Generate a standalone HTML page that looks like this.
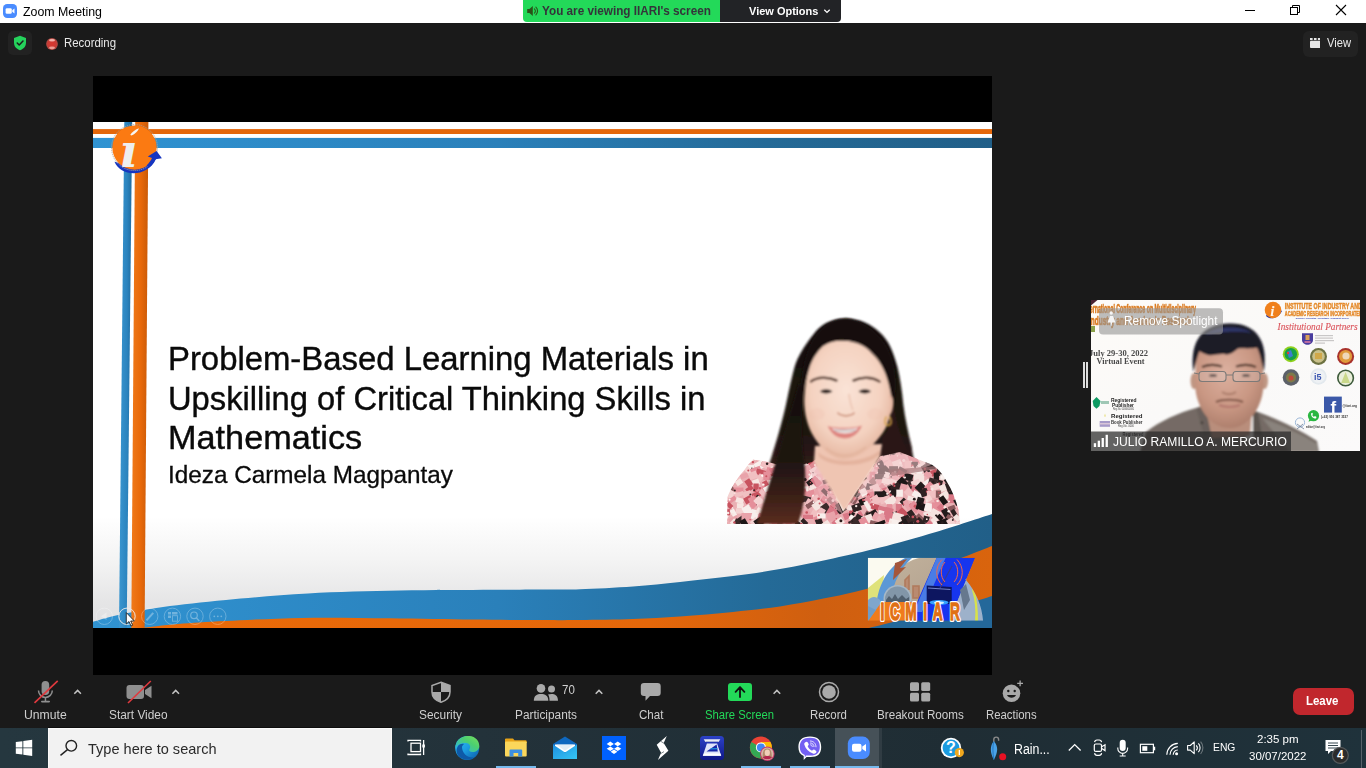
<!DOCTYPE html>
<html lang="en">
<head>
<meta charset="utf-8">
<title>Zoom Meeting</title>
<style>
*{box-sizing:border-box;margin:0;padding:0}
html,body{width:1366px;height:768px;overflow:hidden;background:#1a1a1a;font-family:"Liberation Sans",sans-serif;}
.abs{position:absolute}
.t{position:absolute;white-space:nowrap;line-height:1;transform-origin:0 0}
#titlebar{left:0;top:0;width:1366px;height:23px;background:#fff}
#zoombg{left:0;top:23px;width:1366px;height:705px;background:#1a1a1a}
#share{left:93px;top:76px;width:899px;height:599px;background:#000;overflow:hidden}
#slide{left:0;top:46px;width:899px;height:506px;background:#fff;overflow:hidden}
#taskbar{left:0;top:728px;width:1366px;height:40px;background:#21333c;overflow:hidden}
.lbl{color:#cfcfcf;font-size:12.5px}
</style>
</head>
<body>
<div class="abs" id="titlebar"></div>
<div class="abs" id="zoombg"></div>

<!-- TITLEBAR -->
<div id="tb-content">
<svg class="abs" style="left:3px;top:4px" width="14" height="14" viewBox="0 0 15 15"><rect width="15" height="15" rx="4.500" fill="#4a8cff"/><rect x="2.8" y="4.6" width="6.6" height="5.8" rx="1.4" fill="#fff"/><path d="M9.9 6.6 L12.3 4.9 V10.1 L9.9 8.4Z" fill="#fff"/></svg>
<span class="t" id="t-title" style="left:23px;top:5px;font-size:13px;color:#000;transform:scaleX(0.9507)">Zoom Meeting</span>
</div>

<svg class="abs" style="left:1236px;top:0" width="130" height="23" viewBox="1236 0 130 23">
 <path d="M1245 10.500 H1255" stroke="#000" stroke-width="1"/>
 <rect x="1290.500" y="7.500" width="7" height="7" fill="none" stroke="#000" stroke-width="1"/>
 <path d="M1292.500 7.500 V5.500 H1299.500 V12.500 H1297.500" fill="none" stroke="#000" stroke-width="1"/>
 <path d="M1336 5 L1346 15 M1346 5 L1336 15" stroke="#000" stroke-width="1.100"/>
</svg>
<!-- SHARE BANNER -->
<div class="abs" style="left:523px;top:0;width:197px;height:22px;background:#23d959;border-radius:0 0 0 4px"></div>
<div class="abs" style="left:720px;top:0;width:121px;height:22px;background:#222326;border-radius:0 0 4px 0"></div>
<span class="t" id="t-view" style="left:542px;top:5px;font-size:12px;font-weight:bold;color:#34343a;transform:scaleX(0.9780)">You are viewing IIARI's screen</span>
<span class="t" id="t-vo" style="left:749px;top:5.5px;font-size:11.5px;font-weight:bold;color:#fff;transform:scaleX(0.9554)">View Options</span>

<svg class="abs" style="left:526px;top:4px" width="14" height="14" viewBox="0 0 14 14"><path d="M1.200 5 H3.400 L6.800 2 V12 L3.400 9 H1.200Z" fill="#2a5218"/><path d="M8.400 4.800 A3 3 0 0 1 8.400 9.200 M9.900 3.200 A5.200 5.200 0 0 1 9.900 10.800" stroke="#2a5218" stroke-width="1.100" fill="none" stroke-linecap="round"/></svg>
<svg class="abs" style="left:822px;top:7px" width="10" height="8" viewBox="0 0 10 8"><path d="M2.300 2.800 L5 5.400 L7.700 2.800" stroke="#fff" stroke-width="1.300" fill="none"/></svg>
<!-- SHARE AREA -->
<div class="abs" id="share">
 <div class="abs" id="slide">
  <svg class="abs" style="left:0;top:0" width="899" height="506" viewBox="0 0 899 506">
   <defs>
    <linearGradient id="bgg" x1="0" y1="0" x2="0" y2="1"><stop offset="0" stop-color="#fff"/><stop offset="0.780" stop-color="#fff"/><stop offset="0.870" stop-color="#f3f3f3"/><stop offset="0.950" stop-color="#e5e5e6"/><stop offset="1" stop-color="#e0e0e2"/></linearGradient>
    <linearGradient id="blg" x1="0" y1="0" x2="1" y2="0"><stop offset="0" stop-color="#3093d2"/><stop offset="0.45" stop-color="#2a80ba"/><stop offset="0.75" stop-color="#246a97"/><stop offset="1" stop-color="#215f88"/></linearGradient>
    <linearGradient id="org" x1="0" y1="0" x2="1" y2="0"><stop offset="0" stop-color="#ea6a08"/><stop offset="0.6" stop-color="#e4670a"/><stop offset="0.8" stop-color="#cf5f10"/><stop offset="1" stop-color="#d9640d"/></linearGradient>
    <linearGradient id="vbl" x1="0" y1="0" x2="1" y2="0"><stop offset="0" stop-color="#3a96d0"/><stop offset="0.6" stop-color="#2b84bf"/><stop offset="1" stop-color="#1f6a9c"/></linearGradient>
    <linearGradient id="vor" x1="0" y1="0" x2="1" y2="0"><stop offset="0" stop-color="#f07a1a"/><stop offset="0.55" stop-color="#e8690a"/><stop offset="1" stop-color="#c95a08"/></linearGradient>
   </defs>
   <rect width="899" height="506" fill="url(#bgg)"/>
   <!-- bottom swoosh -->
   <path d="M0.0 499.8 C4.0 498.7 12.3 495.7 24.0 493.2 C35.7 490.7 51.8 487.5 70.0 485.0 C88.2 482.5 108.8 480.2 133.0 478.0 C157.2 475.8 186.0 473.1 215.0 471.5 C244.0 469.9 276.2 469.2 307.0 468.6 C337.8 468.0 375.2 468.0 400.0 467.8 C424.8 467.6 441.5 467.6 456.0 467.5 C470.5 467.4 473.0 467.8 487.0 467.3 C501.0 466.8 523.3 465.7 540.0 464.5 C556.7 463.3 570.3 461.8 587.0 460.0 C603.7 458.2 623.3 456.1 640.0 454.0 C656.7 451.9 670.3 450.0 687.0 447.1 C703.7 444.2 723.3 440.1 740.0 436.5 C756.7 432.9 769.8 430.0 787.0 425.6 C804.2 421.2 824.3 415.6 843.0 410.0 C861.7 404.4 889.7 395.0 899.0 392.0 V506 H0Z" fill="url(#blg)"/>
   <path d="M48.0 506.0 C54.2 505.3 70.8 503.2 85.0 502.0 C99.2 500.8 112.3 500.0 133.0 499.0 C153.7 498.0 181.7 496.3 209.0 495.9 C236.3 495.4 268.5 496.0 297.0 496.3 C325.5 496.6 355.0 497.3 380.0 497.6 C405.0 497.9 429.2 498.0 447.0 498.1 C464.8 498.2 471.5 498.2 487.0 498.0 C502.5 497.8 523.3 497.6 540.0 497.0 C556.7 496.4 570.3 495.6 587.0 494.4 C603.7 493.2 623.3 491.7 640.0 490.0 C656.7 488.3 671.9 486.6 687.0 484.4 C702.1 482.2 715.9 479.6 730.4 476.6 C744.9 473.7 757.7 471.1 774.3 466.7 C790.9 462.3 814.0 455.2 830.0 450.0 C846.0 444.8 858.5 439.6 870.0 435.2 C881.5 430.8 894.2 425.8 899.0 423.9 V506Z" fill="url(#org)"/>
   <path d="M776.0 506.0 C781.7 504.6 799.2 500.2 810.0 497.5 C820.8 494.8 831.0 492.5 841.0 490.0 C851.0 487.5 862.2 484.6 870.0 482.5 C877.8 480.4 883.2 478.9 888.0 477.5 C892.8 476.1 897.2 474.6 899.0 474.0 V506Z" fill="#24689a"/>
   <!-- top lines -->
   <rect x="0" y="7.100" width="899" height="4.900" fill="#e4670a"/>
   <rect x="0" y="15.900" width="899" height="10.100" fill="url(#blg)"/>
   <!-- vertical lines -->
   <path d="M31.300 0 H39.200 L33.700 506 H26Z" fill="url(#vbl)"/>
   <path d="M42.200 0 H55.400 L51.600 506 H38.300Z" fill="url(#vor)"/>
   <!-- logo -->
   <path d="M21.500 39.800 C27 54.500 54 56.500 63 37 L58 35 C50 47 34 48 26 41Z" fill="#1635c0"/>
   <circle cx="41.500" cy="25.600" r="23" fill="none" stroke="#a9a4a0" stroke-width="1" stroke-dasharray="1.200 0.800" opacity="0.850"/>
   <circle cx="41.500" cy="25.600" r="22.200" fill="#fb7a12"/>
   <path d="M54.800 34.600 L63.600 29 L68.900 36.300 L62.600 37.200 C60.500 41 58.500 43.500 56 45.500 L53.500 43.500 C56 41 57.800 38.500 59 35.900Z" fill="#1635c0"/>
   <clipPath id="icl"><rect x="15" y="19.800" width="50" height="40"/></clipPath><text x="27.500" y="44.800" clip-path="url(#icl)" font-family="'DejaVu Serif','Liberation Serif',serif" font-style="italic" font-weight="bold" font-size="47" fill="#eeeeee">i</text>
   <path d="M37.300 12.800 C38.500 10.500 42 7.500 45.800 6.200 C45.500 8.500 42 12 38.200 13.600Z" fill="#f6f6f6"/>
  </svg>

  <!-- PHOTO -->
  <svg class="abs" style="left:634px;top:194px" width="236" height="208" viewBox="727 316 236 208">
   <defs>
    <filter id="pb" x="-5%" y="-5%" width="110%" height="110%"><feGaussianBlur stdDeviation="0.8"/></filter>
    <filter id="pb2" x="-5%" y="-5%" width="110%" height="110%"><feGaussianBlur stdDeviation="0.55"/></filter>
    <filter id="pb3" x="-20%" y="-20%" width="140%" height="140%"><feGaussianBlur stdDeviation="2.2"/></filter>
    <radialGradient id="wskin" cx="0.48" cy="0.42" r="0.62"><stop offset="0" stop-color="#fae3d6"/><stop offset="0.65" stop-color="#f4d2c0"/><stop offset="1" stop-color="#e3b29b"/></radialGradient>
    <linearGradient id="hairg" x1="0" y1="0" x2="0" y2="1"><stop offset="0" stop-color="#15100e"/><stop offset="0.55" stop-color="#1e1411"/><stop offset="0.8" stop-color="#3a2018"/><stop offset="1" stop-color="#5a2c1f"/></linearGradient>
    <clipPath id="dcl"><path d="M727 524 L727.5 497 C730 490 737 478 744 470.500 C747 466 750 462 753 459.500 L768 462 L790 468 L812 462 L818 458 L843 511.500 L880 456 L900 452 L932 464.700 C940 470 944 476 947 482 C952 490 956 500 958.500 510 L960 524Z"/></clipPath>
   </defs>
   <rect x="727.300" y="318" width="232.700" height="205.800" fill="#fff"/>
   <g filter="url(#pb)">
    <!-- hair back -->
    <path d="M846 318.600 C830 318.500 820 326 814.500 333 C804 346 797 358 794.500 367.300 C790 384 788 396 786 404.500 C782 422 778 436 774.400 447.500 C770 462 766 474 763 482 C759 496 755 510 753 524 H800 L812 470 L880 462 L914.700 462 C913 456 912 451 911.900 447.500 C908 432 905 418 903.300 404.500 C902 390 900 378 897.500 367.300 C893 350 888 340 880.400 333 C871 324 860 319 846 318.600Z" fill="url(#hairg)"/>
    <path d="M892 400 C896 420 900 440 914 463 L882 463 C884 452 884 446 882 438 C890 430 892 416 892 400Z" fill="#2c1813"/>
   </g>
   <!-- dress -->
   <g clip-path="url(#dcl)"><g filter="url(#pb2)">
    <rect x="720" y="445" width="250" height="85" fill="#eab0b4"/>
    <rect x="721.1" y="447.9" width="6.9" height="4.8" fill="#d97886" transform="rotate(30 724.6 450.3)"/>
    <circle cx="724.7" cy="447.5" r="1.1" fill="#f7e6e2"/>
    <rect x="726.8" y="451.6" width="8.3" height="4.3" fill="#e9a3aa" transform="rotate(30 731 453.8)"/>
    <circle cx="727.4" cy="452.1" r="1" fill="#fff5f2"/>
    <rect x="735.6" y="448" width="5.7" height="5.5" fill="#e58f9a" transform="rotate(0 738.4 450.7)"/>
    <circle cx="740.1" cy="451.1" r="1.1" fill="#fff5f2"/>
    <rect x="741.6" y="448.3" width="9.7" height="6.3" fill="#f7e6e2" transform="rotate(45 746.4 451.4)"/>
    <rect x="747" y="448.6" width="6.8" height="6.5" fill="#f1c0c2" transform="rotate(-35 750.4 451.8)"/>
    <circle cx="747.7" cy="450.8" r="1.1" fill="#f7e6e2"/>
    <rect x="758.3" y="449.9" width="5.5" height="6.8" fill="#d97886" transform="rotate(30 761 453.3)"/>
    <circle cx="763.4" cy="450.7" r="1.6" fill="#2a1e1f"/>
    <rect x="763.6" y="450.4" width="9" height="4.3" fill="#c8525f" transform="rotate(0 768.1 452.6)"/>
    <rect x="771.8" y="448.1" width="7.1" height="8.7" fill="#e58f9a" transform="rotate(60 775.4 452.4)"/>
    <circle cx="777.3" cy="451.8" r="0.8" fill="#f7e6e2"/>
    <rect x="780.4" y="449.2" width="8.3" height="8.4" fill="#f8efec" transform="rotate(0 784.6 453.5)"/>
    <rect x="785.9" y="450.4" width="6.4" height="4.4" fill="#f1c0c2" transform="rotate(-20 789.1 452.6)"/>
    <circle cx="785.1" cy="452.1" r="1.2" fill="#c8525f"/>
    <rect x="796.3" y="448.5" width="5.8" height="8.3" fill="#c8525f" transform="rotate(60 799.2 452.6)"/>
    <rect x="800.7" y="447.4" width="9.8" height="6" fill="#e9a3aa" transform="rotate(-20 805.6 450.4)"/>
    <circle cx="803.3" cy="448.4" r="1.2" fill="#c8525f"/>
    <rect x="809.9" y="449.1" width="8.4" height="6.7" fill="#2e2223" transform="rotate(30 814.1 452.5)"/>
    <circle cx="815.2" cy="455.2" r="1.1" fill="#c8525f"/>
    <rect x="814.6" y="446.8" width="7.9" height="8.9" fill="#f8efec" transform="rotate(45 818.6 451.2)"/>
    <circle cx="821.2" cy="449.2" r="0.9" fill="#2a1e1f"/>
    <rect x="825.6" y="449.3" width="7.2" height="7.5" fill="#f1c0c2" transform="rotate(45 829.2 453)"/>
    <rect x="828.8" y="449.3" width="10.4" height="5.8" fill="#e58f9a" transform="rotate(30 834 452.2)"/>
    <rect x="840.3" y="448.9" width="10.1" height="8" fill="#c8525f" transform="rotate(0 845.3 453)"/>
    <rect x="846.9" y="449.2" width="9.7" height="6.4" fill="#d97886" transform="rotate(0 851.8 452.4)"/>
    <circle cx="848.6" cy="452.2" r="0.9" fill="#c8525f"/>
    <rect x="855.6" y="448.5" width="10.4" height="8.2" fill="#f5e4e0" transform="rotate(60 860.8 452.6)"/>
    <rect x="864.7" y="446.8" width="9.7" height="7.8" fill="#f8efec" transform="rotate(-35 869.5 450.7)"/>
    <rect x="876.6" y="449.9" width="7.4" height="6" fill="#231a1b" transform="rotate(-35 880.3 452.9)"/>
    <circle cx="883.6" cy="454.7" r="1.3" fill="#fff5f2"/>
    <rect x="881" y="447.8" width="7.8" height="8.7" fill="#1f1718" transform="rotate(-35 884.9 452.2)"/>
    <circle cx="888.4" cy="451.8" r="1.4" fill="#fff5f2"/>
    <rect x="888.7" y="449.6" width="6.5" height="5.5" fill="#3a2a2b" transform="rotate(60 891.9 452.3)"/>
    <circle cx="895.2" cy="451.5" r="1.3" fill="#f7e6e2"/>
    <rect x="898.9" y="446.5" width="8.1" height="8.1" fill="#8a5a5c" transform="rotate(-35 902.9 450.5)"/>
    <rect x="904" y="446.6" width="8.7" height="7.9" fill="#f5e4e0" transform="rotate(30 908.3 450.6)"/>
    <circle cx="909.8" cy="450.8" r="1.4" fill="#f7e6e2"/>
    <rect x="911" y="450.5" width="8.4" height="5.2" fill="#8a5a5c" transform="rotate(-35 915.2 453.1)"/>
    <rect x="921" y="448.5" width="7.7" height="7.1" fill="#d97886" transform="rotate(30 924.8 452)"/>
    <circle cx="924.6" cy="454.7" r="1.5" fill="#c8525f"/>
    <rect x="930" y="448.5" width="6.2" height="6.2" fill="#1f1718" transform="rotate(-20 933.1 451.6)"/>
    <circle cx="930.8" cy="450.4" r="1.5" fill="#2a1e1f"/>
    <rect x="933.9" y="449.9" width="9.3" height="7.3" fill="#f1c0c2" transform="rotate(15 938.5 453.5)"/>
    <rect x="942.7" y="451.4" width="9" height="5.1" fill="#3a2a2b" transform="rotate(-20 947.2 454)"/>
    <circle cx="944" cy="453.2" r="1.2" fill="#c8525f"/>
    <rect x="951.7" y="449.2" width="5.1" height="5.7" fill="#2e2223" transform="rotate(-35 954.2 452)"/>
    <circle cx="952.4" cy="454.5" r="0.9" fill="#fff5f2"/>
    <rect x="957.6" y="446.8" width="7.5" height="8.6" fill="#8a5a5c" transform="rotate(30 961.4 451)"/>
    <circle cx="960" cy="449.7" r="1.1" fill="#fff5f2"/>
    <rect x="717.9" y="456.3" width="8.8" height="8" fill="#f5e4e0" transform="rotate(15 722.3 460.3)"/>
    <circle cx="726.3" cy="459.8" r="1.3" fill="#c8525f"/>
    <rect x="727.4" y="453.6" width="9.3" height="8.7" fill="#f4d3d2" transform="rotate(45 732 457.9)"/>
    <circle cx="734.1" cy="456.7" r="0.9" fill="#fff5f2"/>
    <rect x="731.1" y="456.8" width="11" height="4.2" fill="#c8525f" transform="rotate(-20 736.6 458.9)"/>
    <rect x="739.9" y="457.1" width="9.9" height="6.2" fill="#f4d3d2" transform="rotate(45 744.8 460.2)"/>
    <circle cx="742.7" cy="458.4" r="1.1" fill="#fff5f2"/>
    <rect x="747.5" y="457.5" width="5.3" height="4.6" fill="#f7e6e2" transform="rotate(-35 750.2 459.8)"/>
    <circle cx="752.9" cy="462.1" r="1.2" fill="#c8525f"/>
    <rect x="756.4" y="454.4" width="5.3" height="4.9" fill="#d97886" transform="rotate(30 759.1 456.9)"/>
    <circle cx="755.3" cy="459.2" r="1" fill="#fff5f2"/>
    <rect x="762.3" y="454.5" width="7.3" height="6.4" fill="#e9a3aa" transform="rotate(-35 766 457.7)"/>
    <circle cx="762.7" cy="457.1" r="1.1" fill="#2a1e1f"/>
    <rect x="770.3" y="458.1" width="8.8" height="4.4" fill="#f8efec" transform="rotate(60 774.7 460.3)"/>
    <circle cx="778.6" cy="458.2" r="0.7" fill="#fff5f2"/>
    <rect x="777.1" y="456.6" width="10.4" height="7.1" fill="#8a5a5c" transform="rotate(60 782.3 460.1)"/>
    <circle cx="785" cy="462" r="0.8" fill="#fff5f2"/>
    <rect x="782.6" y="454.3" width="8.8" height="8.8" fill="#e9a3aa" transform="rotate(45 787 458.7)"/>
    <circle cx="785" cy="457.3" r="1.4" fill="#f7e6e2"/>
    <rect x="792.4" y="453.8" width="8" height="6.7" fill="#f4d3d2" transform="rotate(60 796.4 457.1)"/>
    <circle cx="794.5" cy="458.5" r="0.9" fill="#fff5f2"/>
    <rect x="798.1" y="456.4" width="7.8" height="8.2" fill="#e9a3aa" transform="rotate(30 802 460.5)"/>
    <rect x="806.6" y="456.8" width="8.6" height="5.7" fill="#f7e6e2" transform="rotate(-35 810.9 459.6)"/>
    <circle cx="810.8" cy="462.5" r="1.3" fill="#2a1e1f"/>
    <rect x="814.8" y="455.5" width="6.7" height="6.6" fill="#8a5a5c" transform="rotate(-20 818.2 458.7)"/>
    <circle cx="814.9" cy="458.6" r="1.1" fill="#c8525f"/>
    <rect x="820.5" y="454.6" width="10.8" height="6.2" fill="#e58f9a" transform="rotate(-35 825.9 457.7)"/>
    <circle cx="823" cy="457.9" r="0.8" fill="#c8525f"/>
    <rect x="832" y="453.6" width="8.1" height="8.4" fill="#c8525f" transform="rotate(15 836.1 457.8)"/>
    <circle cx="832.1" cy="457.8" r="1.1" fill="#f7e6e2"/>
    <rect x="838.2" y="455.3" width="7.5" height="5.9" fill="#d97886" transform="rotate(60 841.9 458.2)"/>
    <circle cx="845.4" cy="456.4" r="1.5" fill="#2a1e1f"/>
    <rect x="848.7" y="456.3" width="7.2" height="6" fill="#3a2a2b" transform="rotate(60 852.3 459.2)"/>
    <circle cx="848.7" cy="456.8" r="1.3" fill="#c8525f"/>
    <rect x="850.6" y="456.9" width="10.8" height="6.2" fill="#3a2a2b" transform="rotate(-35 856 460)"/>
    <rect x="859.6" y="455.4" width="10.5" height="8.7" fill="#3a2a2b" transform="rotate(15 864.8 459.8)"/>
    <rect x="867.6" y="455.9" width="10.2" height="6.4" fill="#3a2a2b" transform="rotate(0 872.7 459.1)"/>
    <circle cx="870.8" cy="460.5" r="1.1" fill="#c8525f"/>
    <rect x="872.3" y="455.8" width="7.9" height="7.3" fill="#8a5a5c" transform="rotate(60 876.3 459.4)"/>
    <circle cx="874" cy="461.9" r="1.1" fill="#f7e6e2"/>
    <rect x="882.4" y="455.7" width="6.5" height="4.9" fill="#f1c0c2" transform="rotate(-20 885.6 458.2)"/>
    <rect x="890" y="455.3" width="7.5" height="6.1" fill="#e9a3aa" transform="rotate(15 893.8 458.4)"/>
    <circle cx="897.5" cy="456.1" r="0.8" fill="#fff5f2"/>
    <rect x="898.4" y="454.5" width="7.3" height="7.2" fill="#e9a3aa" transform="rotate(-20 902.1 458.1)"/>
    <circle cx="903.8" cy="460.5" r="1.6" fill="#f7e6e2"/>
    <rect x="908.8" y="454.7" width="5.4" height="8.7" fill="#d97886" transform="rotate(-20 911.5 459)"/>
    <rect x="912" y="455.7" width="5.9" height="8.9" fill="#d97886" transform="rotate(-35 914.9 460.2)"/>
    <circle cx="911.2" cy="461.9" r="1.2" fill="#fff5f2"/>
    <rect x="918.5" y="454.6" width="9.3" height="8.8" fill="#f5e4e0" transform="rotate(-35 923.1 459)"/>
    <circle cx="923.3" cy="459.5" r="0.9" fill="#f7e6e2"/>
    <rect x="930.5" y="454.6" width="5" height="6.7" fill="#2e2223" transform="rotate(15 933 458)"/>
    <circle cx="933.3" cy="455.2" r="1.3" fill="#f7e6e2"/>
    <rect x="936" y="455.3" width="5.1" height="6.5" fill="#1f1718" transform="rotate(15 938.6 458.6)"/>
    <rect x="941.7" y="456.8" width="5.2" height="5.7" fill="#e58f9a" transform="rotate(45 944.3 459.6)"/>
    <rect x="947.9" y="455.2" width="8" height="5" fill="#e58f9a" transform="rotate(60 951.8 457.7)"/>
    <rect x="954.3" y="455.3" width="8.7" height="7.1" fill="#f1c0c2" transform="rotate(-20 958.7 458.8)"/>
    <rect x="960.4" y="456.2" width="5.1" height="7" fill="#d97886" transform="rotate(45 962.9 459.7)"/>
    <rect x="717.4" y="464.8" width="10.6" height="5.6" fill="#e9a3aa" transform="rotate(0 722.7 467.6)"/>
    <rect x="726.2" y="461.1" width="7.2" height="5.7" fill="#d97886" transform="rotate(15 729.8 463.9)"/>
    <rect x="731.5" y="464.6" width="10.8" height="5" fill="#f8efec" transform="rotate(-35 736.9 467.2)"/>
    <circle cx="736.7" cy="466.4" r="0.9" fill="#f7e6e2"/>
    <rect x="739.1" y="465" width="10.4" height="4.2" fill="#e9a3aa" transform="rotate(15 744.2 467.1)"/>
    <circle cx="740.7" cy="469.6" r="0.9" fill="#c8525f"/>
    <rect x="745.8" y="464.8" width="8.6" height="5.8" fill="#f8efec" transform="rotate(0 750.1 467.7)"/>
    <circle cx="751.9" cy="468.3" r="0.7" fill="#2a1e1f"/>
    <rect x="755.4" y="461" width="7.9" height="8.8" fill="#f8efec" transform="rotate(60 759.3 465.4)"/>
    <circle cx="762.7" cy="463.5" r="1.4" fill="#c8525f"/>
    <rect x="760.8" y="462.5" width="8.6" height="5.6" fill="#f1c0c2" transform="rotate(30 765.1 465.3)"/>
    <circle cx="767.1" cy="463.8" r="1.3" fill="#2a1e1f"/>
    <rect x="768.8" y="461.9" width="8.3" height="4.8" fill="#f1c0c2" transform="rotate(-35 773 464.3)"/>
    <circle cx="772.3" cy="467.2" r="0.9" fill="#f7e6e2"/>
    <rect x="774.7" y="461.8" width="7.8" height="8.5" fill="#f1c0c2" transform="rotate(60 778.6 466)"/>
    <rect x="783.3" y="461.7" width="8.4" height="5.9" fill="#e58f9a" transform="rotate(-20 787.5 464.7)"/>
    <circle cx="790.6" cy="465.1" r="0.8" fill="#c8525f"/>
    <rect x="790.6" y="461" width="6.5" height="6.6" fill="#e9a3aa" transform="rotate(-35 793.9 464.3)"/>
    <circle cx="796.9" cy="462.7" r="1.5" fill="#f7e6e2"/>
    <rect x="794.8" y="465.5" width="6.8" height="4.6" fill="#f1c0c2" transform="rotate(0 798.2 467.8)"/>
    <circle cx="795.6" cy="468.4" r="0.8" fill="#2a1e1f"/>
    <rect x="802.3" y="461.9" width="8.7" height="5.1" fill="#f4d3d2" transform="rotate(-35 806.7 464.4)"/>
    <circle cx="807.9" cy="462.7" r="1.4" fill="#2a1e1f"/>
    <rect x="809.1" y="460.4" width="7.2" height="7.1" fill="#c8525f" transform="rotate(-35 812.7 464)"/>
    <circle cx="815.1" cy="465" r="1.3" fill="#fff5f2"/>
    <rect x="817.3" y="461.3" width="6" height="7.5" fill="#e9a3aa" transform="rotate(0 820.3 465)"/>
    <rect x="826.7" y="465" width="7.5" height="4.1" fill="#f8efec" transform="rotate(45 830.4 467.1)"/>
    <circle cx="834" cy="466.7" r="1.1" fill="#fff5f2"/>
    <rect x="833.9" y="460.3" width="7.4" height="8.4" fill="#8a5a5c" transform="rotate(-20 837.7 464.5)"/>
    <rect x="843.3" y="462.3" width="5.5" height="7.1" fill="#e58f9a" transform="rotate(-20 846 465.9)"/>
    <circle cx="849.4" cy="463.5" r="1.4" fill="#f7e6e2"/>
    <rect x="851.4" y="461.3" width="9.8" height="5.5" fill="#f8efec" transform="rotate(-35 856.3 464)"/>
    <rect x="858.9" y="462.4" width="9.9" height="4.8" fill="#2e2223" transform="rotate(60 863.9 464.8)"/>
    <circle cx="864.4" cy="462" r="1" fill="#fff5f2"/>
    <rect x="867.5" y="460.2" width="6.5" height="7.6" fill="#1f1718" transform="rotate(-35 870.7 464)"/>
    <rect x="873.8" y="463.8" width="7.3" height="6.3" fill="#e58f9a" transform="rotate(30 877.5 467)"/>
    <circle cx="876.6" cy="466.2" r="0.9" fill="#f7e6e2"/>
    <rect x="876.5" y="463.2" width="10.9" height="6.3" fill="#231a1b" transform="rotate(60 881.9 466.3)"/>
    <circle cx="878.8" cy="464.1" r="1" fill="#f7e6e2"/>
    <rect x="884.7" y="460.8" width="8" height="7.3" fill="#f1c0c2" transform="rotate(-35 888.7 464.4)"/>
    <rect x="892.9" y="460.2" width="8.9" height="7.9" fill="#f5e4e0" transform="rotate(-20 897.3 464.1)"/>
    <circle cx="900.4" cy="462.9" r="1.3" fill="#fff5f2"/>
    <rect x="904.7" y="460.8" width="6.3" height="8.2" fill="#f1c0c2" transform="rotate(0 907.8 464.9)"/>
    <rect x="911.4" y="461.8" width="6.5" height="8.8" fill="#2e2223" transform="rotate(0 914.7 466.2)"/>
    <circle cx="912.3" cy="465.7" r="1.3" fill="#c8525f"/>
    <rect x="918.9" y="462" width="6" height="7.9" fill="#f8efec" transform="rotate(60 921.9 466)"/>
    <circle cx="922.1" cy="467.1" r="0.9" fill="#2a1e1f"/>
    <rect x="925.5" y="461.5" width="10.1" height="7.7" fill="#231a1b" transform="rotate(0 930.5 465.4)"/>
    <circle cx="927.2" cy="463.8" r="1" fill="#2a1e1f"/>
    <rect x="936.6" y="463.2" width="6.9" height="8.8" fill="#e9a3aa" transform="rotate(-20 940.1 467.6)"/>
    <circle cx="941" cy="467.2" r="1.5" fill="#c8525f"/>
    <rect x="939.9" y="460.2" width="6.4" height="7.3" fill="#f5e4e0" transform="rotate(30 943.1 463.9)"/>
    <circle cx="940.9" cy="464.4" r="0.9" fill="#fff5f2"/>
    <rect x="950.7" y="462.5" width="7.8" height="4.7" fill="#f5e4e0" transform="rotate(-35 954.6 464.8)"/>
    <rect x="955.7" y="460.9" width="9.7" height="6" fill="#8a5a5c" transform="rotate(0 960.5 463.9)"/>
    <circle cx="961.2" cy="464.5" r="0.9" fill="#f7e6e2"/>
    <rect x="718.9" y="466.2" width="8.2" height="6" fill="#e9a3aa" transform="rotate(30 723 469.2)"/>
    <circle cx="726.5" cy="467" r="1.2" fill="#fff5f2"/>
    <rect x="727.9" y="468" width="8.9" height="6.1" fill="#1f1718" transform="rotate(-35 732.4 471)"/>
    <rect x="735.7" y="467.4" width="7.9" height="6.7" fill="#f1c0c2" transform="rotate(45 739.6 470.7)"/>
    <rect x="741.7" y="466.8" width="11" height="5.3" fill="#f4d3d2" transform="rotate(45 747.2 469.5)"/>
    <circle cx="748.3" cy="470.5" r="1" fill="#c8525f"/>
    <rect x="750.3" y="467.4" width="10.4" height="4.4" fill="#e58f9a" transform="rotate(-20 755.4 469.6)"/>
    <rect x="756.2" y="469.8" width="10.3" height="5.6" fill="#c8525f" transform="rotate(15 761.4 472.6)"/>
    <rect x="766.3" y="468.1" width="10.1" height="6.2" fill="#e58f9a" transform="rotate(15 771.4 471.2)"/>
    <rect x="769.6" y="467" width="10.5" height="4.7" fill="#d97886" transform="rotate(-20 774.8 469.4)"/>
    <rect x="778.1" y="465.6" width="5.8" height="7.2" fill="#f1c0c2" transform="rotate(60 781 469.2)"/>
    <circle cx="783.5" cy="471.1" r="1.5" fill="#2a1e1f"/>
    <rect x="785.4" y="466.8" width="9.3" height="5.9" fill="#1f1718" transform="rotate(-35 790.1 469.8)"/>
    <rect x="794" y="469.7" width="6.7" height="4.5" fill="#d97886" transform="rotate(0 797.4 472)"/>
    <circle cx="793.5" cy="470.5" r="0.7" fill="#c8525f"/>
    <rect x="802.4" y="466.9" width="10.5" height="7.8" fill="#e9a3aa" transform="rotate(60 807.7 470.9)"/>
    <circle cx="807.2" cy="472.5" r="1.1" fill="#c8525f"/>
    <rect x="810.5" y="467.5" width="8.4" height="7.6" fill="#f8efec" transform="rotate(-35 814.7 471.3)"/>
    <circle cx="813" cy="472.8" r="0.7" fill="#2a1e1f"/>
    <rect x="815.6" y="466.9" width="7.9" height="8" fill="#f4d3d2" transform="rotate(30 819.6 470.9)"/>
    <rect x="824.6" y="465.7" width="6.3" height="7.5" fill="#f1c0c2" transform="rotate(15 827.7 469.4)"/>
    <rect x="830.4" y="467" width="9.7" height="7.1" fill="#f5e4e0" transform="rotate(15 835.2 470.6)"/>
    <rect x="840.4" y="468.3" width="6.2" height="5.3" fill="#1f1718" transform="rotate(-20 843.5 471)"/>
    <rect x="844.4" y="465.4" width="8.6" height="7.4" fill="#8a5a5c" transform="rotate(-20 848.7 469.1)"/>
    <rect x="851.3" y="468.9" width="8.3" height="5.6" fill="#2e2223" transform="rotate(-20 855.5 471.7)"/>
    <circle cx="856.6" cy="472.9" r="0.9" fill="#fff5f2"/>
    <rect x="859.8" y="469.3" width="10" height="7.1" fill="#f1c0c2" transform="rotate(30 864.8 472.9)"/>
    <circle cx="862.7" cy="475.6" r="1.6" fill="#c8525f"/>
    <rect x="867.7" y="466.1" width="5.6" height="8.8" fill="#f4d3d2" transform="rotate(15 870.5 470.5)"/>
    <circle cx="867.4" cy="473" r="0.9" fill="#c8525f"/>
    <rect x="877.8" y="468.7" width="5.2" height="6" fill="#1f1718" transform="rotate(0 880.4 471.7)"/>
    <circle cx="877.5" cy="472.4" r="0.7" fill="#f7e6e2"/>
    <rect x="881.3" y="467.8" width="10.1" height="7.5" fill="#1f1718" transform="rotate(45 886.3 471.5)"/>
    <rect x="889.1" y="466.2" width="8.9" height="6.9" fill="#3a2a2b" transform="rotate(0 893.5 469.7)"/>
    <circle cx="895.1" cy="472.1" r="1.4" fill="#fff5f2"/>
    <rect x="898" y="468.2" width="8.8" height="5.3" fill="#3a2a2b" transform="rotate(30 902.4 470.8)"/>
    <rect x="909.6" y="466.9" width="6.1" height="7.3" fill="#f5e4e0" transform="rotate(-35 912.6 470.5)"/>
    <circle cx="910.4" cy="471.8" r="1.2" fill="#fff5f2"/>
    <rect x="914.5" y="467.7" width="8.4" height="6.7" fill="#f8efec" transform="rotate(30 918.7 471)"/>
    <circle cx="920.6" cy="470.7" r="1.1" fill="#fff5f2"/>
    <rect x="922.7" y="464.7" width="5.7" height="8.9" fill="#3a2a2b" transform="rotate(-35 925.5 469.2)"/>
    <circle cx="924.9" cy="468.7" r="1.2" fill="#c8525f"/>
    <rect x="930.8" y="469.8" width="6.8" height="6" fill="#c8525f" transform="rotate(-20 934.3 472.8)"/>
    <circle cx="937.7" cy="470.3" r="1.1" fill="#fff5f2"/>
    <rect x="936.4" y="467.1" width="6.4" height="8.8" fill="#3a2a2b" transform="rotate(15 939.5 471.5)"/>
    <rect x="943.8" y="468.1" width="8.9" height="7.9" fill="#3a2a2b" transform="rotate(45 948.3 472.1)"/>
    <circle cx="947.7" cy="470.2" r="1.4" fill="#2a1e1f"/>
    <rect x="952.5" y="467.3" width="7.1" height="7.3" fill="#f5e4e0" transform="rotate(45 956.1 470.9)"/>
    <rect x="958.2" y="468.3" width="6.8" height="5.9" fill="#231a1b" transform="rotate(30 961.6 471.2)"/>
    <rect x="722.1" y="470.6" width="5.1" height="8.8" fill="#231a1b" transform="rotate(60 724.6 475)"/>
    <circle cx="726.8" cy="474.1" r="0.9" fill="#fff5f2"/>
    <rect x="727.9" y="474.4" width="8.2" height="7" fill="#8a5a5c" transform="rotate(60 732 477.9)"/>
    <rect x="732.4" y="474.8" width="8" height="5.1" fill="#f1c0c2" transform="rotate(30 736.4 477.3)"/>
    <circle cx="735.8" cy="479.3" r="1.1" fill="#f7e6e2"/>
    <rect x="740.3" y="473.6" width="7.8" height="4.7" fill="#e9a3aa" transform="rotate(-20 744.2 476)"/>
    <rect x="748.9" y="471.8" width="8.4" height="7.3" fill="#f1c0c2" transform="rotate(-20 753 475.5)"/>
    <rect x="757.7" y="474.2" width="5.2" height="7" fill="#f1c0c2" transform="rotate(30 760.3 477.7)"/>
    <circle cx="762.4" cy="475.6" r="1.3" fill="#fff5f2"/>
    <rect x="763.4" y="471.7" width="7" height="8.3" fill="#e58f9a" transform="rotate(0 766.9 475.9)"/>
    <circle cx="766.3" cy="476.2" r="1" fill="#c8525f"/>
    <rect x="771.3" y="472.8" width="7.4" height="6.5" fill="#c8525f" transform="rotate(60 775 476)"/>
    <circle cx="772.6" cy="477.3" r="1.2" fill="#fff5f2"/>
    <rect x="779.9" y="475.4" width="9.7" height="4.2" fill="#e9a3aa" transform="rotate(15 784.7 477.5)"/>
    <circle cx="780.8" cy="475.7" r="1.2" fill="#f7e6e2"/>
    <rect x="787.4" y="472.2" width="9.7" height="8.5" fill="#f1c0c2" transform="rotate(-20 792.3 476.5)"/>
    <circle cx="793.3" cy="477.2" r="0.8" fill="#fff5f2"/>
    <rect x="797.4" y="472.7" width="5.2" height="7.9" fill="#f7e6e2" transform="rotate(60 800 476.6)"/>
    <circle cx="801.7" cy="478.8" r="1.1" fill="#fff5f2"/>
    <rect x="803.3" y="470.6" width="7.6" height="7.2" fill="#e9a3aa" transform="rotate(60 807.1 474.2)"/>
    <circle cx="809.5" cy="474.7" r="1.1" fill="#f7e6e2"/>
    <rect x="809.5" y="474.4" width="7.3" height="7" fill="#f8efec" transform="rotate(30 813.1 477.9)"/>
    <circle cx="814.3" cy="476.2" r="1.3" fill="#fff5f2"/>
    <rect x="818.1" y="473.8" width="5.1" height="7.3" fill="#f1c0c2" transform="rotate(-20 820.6 477.4)"/>
    <circle cx="818.8" cy="477.8" r="1.4" fill="#f7e6e2"/>
    <rect x="823.4" y="473.5" width="5.3" height="7.9" fill="#f5e4e0" transform="rotate(0 826.1 477.4)"/>
    <rect x="828.5" y="473.5" width="7.8" height="8.7" fill="#e9a3aa" transform="rotate(-35 832.4 477.8)"/>
    <circle cx="833.6" cy="479.8" r="1.1" fill="#2a1e1f"/>
    <rect x="837.3" y="472" width="8.6" height="8.8" fill="#f1c0c2" transform="rotate(45 841.6 476.4)"/>
    <circle cx="843" cy="474.3" r="1" fill="#2a1e1f"/>
    <rect x="843.4" y="474.1" width="8.8" height="6.1" fill="#d97886" transform="rotate(0 847.8 477.1)"/>
    <circle cx="848.7" cy="478" r="1.5" fill="#c8525f"/>
    <rect x="855.2" y="474" width="5.1" height="4.8" fill="#f8efec" transform="rotate(45 857.7 476.3)"/>
    <circle cx="859.9" cy="474.7" r="1" fill="#f7e6e2"/>
    <rect x="859.4" y="474.2" width="6.6" height="6.1" fill="#231a1b" transform="rotate(60 862.7 477.3)"/>
    <rect x="869.6" y="471.7" width="5.9" height="8.9" fill="#d97886" transform="rotate(0 872.6 476.2)"/>
    <circle cx="872.9" cy="476.1" r="0.9" fill="#f7e6e2"/>
    <rect x="874.8" y="474.1" width="10.6" height="5.2" fill="#2e2223" transform="rotate(0 880 476.7)"/>
    <circle cx="876.1" cy="476" r="1.2" fill="#2a1e1f"/>
    <rect x="884.1" y="472" width="5.4" height="6" fill="#f8efec" transform="rotate(15 886.8 475)"/>
    <circle cx="884.4" cy="473.3" r="0.9" fill="#2a1e1f"/>
    <rect x="890.8" y="472.6" width="7.2" height="6.8" fill="#e9a3aa" transform="rotate(15 894.4 476.1)"/>
    <circle cx="891.2" cy="476.9" r="0.8" fill="#2a1e1f"/>
    <rect x="897.1" y="470.8" width="7.1" height="6.6" fill="#c8525f" transform="rotate(30 900.7 474.1)"/>
    <circle cx="898.8" cy="475.8" r="0.8" fill="#f7e6e2"/>
    <rect x="904.2" y="473.8" width="8.6" height="7" fill="#231a1b" transform="rotate(15 908.4 477.4)"/>
    <circle cx="904.9" cy="477.7" r="1.1" fill="#f7e6e2"/>
    <rect x="913.8" y="473.5" width="10.4" height="8.3" fill="#f5e4e0" transform="rotate(0 919 477.7)"/>
    <circle cx="916.9" cy="475.2" r="0.9" fill="#f7e6e2"/>
    <rect x="924.3" y="472.1" width="7.2" height="5.2" fill="#e9a3aa" transform="rotate(30 927.9 474.7)"/>
    <rect x="933.7" y="472.6" width="5.3" height="7.9" fill="#231a1b" transform="rotate(0 936.4 476.6)"/>
    <rect x="940.2" y="474.3" width="9.1" height="5.5" fill="#f8efec" transform="rotate(0 944.7 477)"/>
    <circle cx="941.7" cy="476.9" r="1.1" fill="#fff5f2"/>
    <rect x="947.4" y="473.4" width="10.5" height="8.5" fill="#231a1b" transform="rotate(60 952.6 477.6)"/>
    <circle cx="956.1" cy="479.8" r="1.4" fill="#fff5f2"/>
    <rect x="954.4" y="471.3" width="10.6" height="5.9" fill="#e58f9a" transform="rotate(15 959.7 474.3)"/>
    <circle cx="958.6" cy="473.3" r="0.9" fill="#2a1e1f"/>
    <rect x="719.9" y="479.4" width="7.6" height="4.7" fill="#f1c0c2" transform="rotate(60 723.7 481.8)"/>
    <circle cx="726.1" cy="480.3" r="1" fill="#2a1e1f"/>
    <rect x="728.1" y="479.9" width="5.7" height="8.9" fill="#e58f9a" transform="rotate(30 730.9 484.3)"/>
    <circle cx="729.2" cy="482.9" r="1.6" fill="#fff5f2"/>
    <rect x="735.7" y="479.7" width="6.6" height="5.2" fill="#f7e6e2" transform="rotate(-35 739 482.3)"/>
    <rect x="745.8" y="479.2" width="5.9" height="7.2" fill="#c8525f" transform="rotate(-35 748.7 482.8)"/>
    <rect x="752.6" y="479.5" width="6.7" height="5.8" fill="#f7e6e2" transform="rotate(-20 755.9 482.4)"/>
    <rect x="762.5" y="481.6" width="6.4" height="4.9" fill="#c8525f" transform="rotate(60 765.7 484.1)"/>
    <circle cx="763.4" cy="484.8" r="1.2" fill="#fff5f2"/>
    <rect x="768.9" y="479.8" width="5.4" height="7.7" fill="#f8efec" transform="rotate(0 771.6 483.7)"/>
    <circle cx="772.7" cy="486.3" r="0.7" fill="#2a1e1f"/>
    <rect x="775.8" y="477.3" width="7.9" height="8.4" fill="#d97886" transform="rotate(-35 779.7 481.5)"/>
    <circle cx="778.7" cy="482.1" r="1" fill="#2a1e1f"/>
    <rect x="783.5" y="479.6" width="10.8" height="4.4" fill="#d97886" transform="rotate(60 788.9 481.7)"/>
    <rect x="793.4" y="482.4" width="9.5" height="4.3" fill="#e9a3aa" transform="rotate(30 798.1 484.6)"/>
    <rect x="800.3" y="479.2" width="6.5" height="4.4" fill="#e9a3aa" transform="rotate(-35 803.5 481.4)"/>
    <circle cx="805.1" cy="479.6" r="1.5" fill="#2a1e1f"/>
    <rect x="806.8" y="479.6" width="7.8" height="5.2" fill="#231a1b" transform="rotate(-35 810.7 482.2)"/>
    <circle cx="810.4" cy="482.7" r="0.8" fill="#c8525f"/>
    <rect x="811" y="478.3" width="10.3" height="6.7" fill="#d97886" transform="rotate(45 816.2 481.7)"/>
    <circle cx="819.8" cy="478.8" r="1.3" fill="#f7e6e2"/>
    <rect x="822.7" y="478.9" width="8.6" height="4.2" fill="#3a2a2b" transform="rotate(-20 827 481)"/>
    <rect x="830.1" y="478.6" width="10.1" height="6.8" fill="#8a5a5c" transform="rotate(-35 835.2 482.1)"/>
    <circle cx="832.3" cy="483.1" r="0.9" fill="#c8525f"/>
    <rect x="836.2" y="478.1" width="8.8" height="5.8" fill="#8a5a5c" transform="rotate(45 840.6 481)"/>
    <circle cx="837.7" cy="483.9" r="1.3" fill="#f7e6e2"/>
    <rect x="841.9" y="479.1" width="10.3" height="8.4" fill="#1f1718" transform="rotate(30 847.1 483.3)"/>
    <circle cx="847.4" cy="485.9" r="0.9" fill="#2a1e1f"/>
    <rect x="851.8" y="477.6" width="7.6" height="8.8" fill="#f5e4e0" transform="rotate(-35 855.6 482)"/>
    <circle cx="859.3" cy="482.1" r="0.8" fill="#c8525f"/>
    <rect x="859" y="481.2" width="10.6" height="6.2" fill="#f4d3d2" transform="rotate(-20 864.3 484.3)"/>
    <rect x="869.9" y="478.5" width="6.7" height="6.3" fill="#8a5a5c" transform="rotate(45 873.3 481.7)"/>
    <circle cx="876.4" cy="480.5" r="1.1" fill="#f7e6e2"/>
    <rect x="876.2" y="479.7" width="6.5" height="5.1" fill="#e9a3aa" transform="rotate(0 879.5 482.3)"/>
    <circle cx="883.1" cy="481.2" r="1.1" fill="#c8525f"/>
    <rect x="881.9" y="478.7" width="10.9" height="5.5" fill="#f8efec" transform="rotate(15 887.4 481.4)"/>
    <rect x="889.9" y="480" width="10" height="5.8" fill="#f7e6e2" transform="rotate(15 894.9 482.9)"/>
    <circle cx="893.7" cy="483.9" r="1.4" fill="#c8525f"/>
    <rect x="897.7" y="478.8" width="9.4" height="7.7" fill="#1f1718" transform="rotate(45 902.4 482.7)"/>
    <circle cx="905.4" cy="479.7" r="1.1" fill="#2a1e1f"/>
    <rect x="907.2" y="481.2" width="8.4" height="6.1" fill="#3a2a2b" transform="rotate(60 911.4 484.3)"/>
    <circle cx="911.1" cy="485.6" r="1" fill="#c8525f"/>
    <rect x="911.6" y="480.1" width="8.6" height="7.2" fill="#f4d3d2" transform="rotate(-20 915.9 483.8)"/>
    <circle cx="918.3" cy="483.4" r="1.2" fill="#f7e6e2"/>
    <rect x="920.2" y="481.3" width="10.5" height="5.6" fill="#f8efec" transform="rotate(-35 925.5 484.1)"/>
    <circle cx="923.5" cy="486.5" r="1.5" fill="#c8525f"/>
    <rect x="928.4" y="478.3" width="8.2" height="9" fill="#3a2a2b" transform="rotate(15 932.5 482.8)"/>
    <circle cx="933.2" cy="481.9" r="1.3" fill="#2a1e1f"/>
    <rect x="936.8" y="480.1" width="5.6" height="5.9" fill="#2e2223" transform="rotate(15 939.6 483)"/>
    <circle cx="939.1" cy="483.8" r="1.3" fill="#c8525f"/>
    <rect x="944.9" y="478.2" width="5.6" height="5.8" fill="#231a1b" transform="rotate(-35 947.7 481.1)"/>
    <rect x="951.6" y="480.3" width="7.1" height="8.7" fill="#8a5a5c" transform="rotate(0 955.2 484.7)"/>
    <rect x="954.8" y="480" width="10.4" height="6.1" fill="#f1c0c2" transform="rotate(45 960 483)"/>
    <rect x="719.9" y="483.8" width="9.7" height="5.5" fill="#f1c0c2" transform="rotate(30 724.8 486.6)"/>
    <circle cx="721" cy="484.7" r="1.5" fill="#c8525f"/>
    <rect x="727.4" y="486.6" width="8.1" height="4.7" fill="#8a5a5c" transform="rotate(60 731.5 489)"/>
    <circle cx="727.7" cy="486.5" r="1.4" fill="#f7e6e2"/>
    <rect x="733.7" y="487.5" width="9.8" height="4.3" fill="#e58f9a" transform="rotate(0 738.6 489.7)"/>
    <circle cx="734.8" cy="490.4" r="1" fill="#2a1e1f"/>
    <rect x="745.8" y="486.8" width="7.3" height="4.3" fill="#c8525f" transform="rotate(-35 749.4 488.9)"/>
    <rect x="753.4" y="483.5" width="5.3" height="8.7" fill="#c8525f" transform="rotate(0 756 487.9)"/>
    <circle cx="754.1" cy="490.2" r="0.9" fill="#2a1e1f"/>
    <rect x="756.4" y="487.5" width="9.3" height="5.1" fill="#e58f9a" transform="rotate(-35 761 490.1)"/>
    <circle cx="759.9" cy="488.2" r="1.1" fill="#c8525f"/>
    <rect x="764.7" y="485" width="7" height="8.4" fill="#f8efec" transform="rotate(60 768.2 489.2)"/>
    <rect x="772.3" y="485.2" width="7.3" height="6.3" fill="#e9a3aa" transform="rotate(0 775.9 488.3)"/>
    <rect x="780.6" y="487.3" width="5.8" height="5" fill="#c8525f" transform="rotate(60 783.4 489.7)"/>
    <rect x="786" y="486.6" width="7.2" height="5.1" fill="#f4d3d2" transform="rotate(15 789.6 489.1)"/>
    <circle cx="787.4" cy="488.8" r="1.5" fill="#fff5f2"/>
    <rect x="796.7" y="485.6" width="8.6" height="6.2" fill="#e58f9a" transform="rotate(-20 800.9 488.7)"/>
    <rect x="800.4" y="486.3" width="8.1" height="6.7" fill="#f7e6e2" transform="rotate(0 804.4 489.7)"/>
    <circle cx="806.1" cy="490.8" r="1" fill="#fff5f2"/>
    <rect x="810" y="485.2" width="5.7" height="6.8" fill="#f5e4e0" transform="rotate(45 812.8 488.6)"/>
    <circle cx="810.6" cy="486.3" r="1" fill="#f7e6e2"/>
    <rect x="816.9" y="486.1" width="10.5" height="7.9" fill="#e58f9a" transform="rotate(-20 822.1 490)"/>
    <circle cx="823.5" cy="491" r="1.5" fill="#c8525f"/>
    <rect x="824" y="485" width="9.2" height="6.3" fill="#e58f9a" transform="rotate(-35 828.6 488.2)"/>
    <circle cx="829.5" cy="486.5" r="1.1" fill="#2a1e1f"/>
    <rect x="829.3" y="485.7" width="7.6" height="7.8" fill="#1f1718" transform="rotate(45 833.1 489.5)"/>
    <rect x="839" y="487" width="6.4" height="6.5" fill="#f1c0c2" transform="rotate(0 842.2 490.3)"/>
    <rect x="845.3" y="486.5" width="9.6" height="7.3" fill="#e9a3aa" transform="rotate(-20 850.1 490.1)"/>
    <rect x="850.5" y="486.3" width="6.9" height="7.9" fill="#3a2a2b" transform="rotate(45 854 490.2)"/>
    <rect x="859" y="485.5" width="8.2" height="5.7" fill="#8a5a5c" transform="rotate(45 863.1 488.4)"/>
    <rect x="866.1" y="484.1" width="8.8" height="6.5" fill="#231a1b" transform="rotate(15 870.5 487.4)"/>
    <rect x="870.3" y="484.8" width="9.2" height="8" fill="#f4d3d2" transform="rotate(-20 874.9 488.8)"/>
    <rect x="879.4" y="484.9" width="7.1" height="4.5" fill="#d97886" transform="rotate(45 883 487.1)"/>
    <circle cx="884.6" cy="484.2" r="0.8" fill="#f7e6e2"/>
    <rect x="886.6" y="486.6" width="9.2" height="4.7" fill="#1f1718" transform="rotate(60 891.2 488.9)"/>
    <circle cx="890.6" cy="491.6" r="1.2" fill="#fff5f2"/>
    <rect x="891.4" y="483.7" width="9.6" height="8.2" fill="#2e2223" transform="rotate(-35 896.2 487.7)"/>
    <circle cx="894.4" cy="485.9" r="1.1" fill="#c8525f"/>
    <rect x="900" y="484.1" width="6.9" height="6.3" fill="#e9a3aa" transform="rotate(15 903.5 487.3)"/>
    <rect x="911.5" y="485.1" width="5.5" height="7.6" fill="#d97886" transform="rotate(15 914.2 488.8)"/>
    <circle cx="916.5" cy="487.8" r="1.5" fill="#c8525f"/>
    <rect x="916.5" y="483.3" width="8.8" height="8.7" fill="#231a1b" transform="rotate(45 920.8 487.6)"/>
    <circle cx="923" cy="489.6" r="1" fill="#c8525f"/>
    <rect x="925.8" y="482.8" width="8.2" height="8.5" fill="#e58f9a" transform="rotate(45 929.9 487)"/>
    <rect x="930.7" y="484.2" width="8.9" height="5.8" fill="#f4d3d2" transform="rotate(-20 935.2 487.1)"/>
    <circle cx="932" cy="489" r="1.5" fill="#f7e6e2"/>
    <rect x="939.7" y="484.5" width="8" height="6.5" fill="#f5e4e0" transform="rotate(-20 943.7 487.8)"/>
    <rect x="946.1" y="482.3" width="7.7" height="8.8" fill="#2e2223" transform="rotate(-20 949.9 486.8)"/>
    <rect x="953.7" y="484.2" width="10" height="8.3" fill="#1f1718" transform="rotate(-35 958.7 488.3)"/>
    <circle cx="958.1" cy="487.3" r="0.7" fill="#f7e6e2"/>
    <rect x="717.3" y="492.2" width="9.3" height="5.9" fill="#e58f9a" transform="rotate(15 722 495.2)"/>
    <circle cx="720.6" cy="494.9" r="1.6" fill="#fff5f2"/>
    <rect x="726.8" y="490.6" width="8.7" height="8.1" fill="#f4d3d2" transform="rotate(30 731.1 494.6)"/>
    <circle cx="734.7" cy="494.5" r="1" fill="#fff5f2"/>
    <rect x="733.5" y="492.6" width="10.3" height="4.1" fill="#f1c0c2" transform="rotate(-20 738.7 494.7)"/>
    <rect x="742.9" y="491.2" width="8.5" height="6.1" fill="#f1c0c2" transform="rotate(-20 747.2 494.2)"/>
    <circle cx="750.3" cy="494.5" r="0.9" fill="#2a1e1f"/>
    <rect x="751.8" y="492.3" width="8.9" height="4.9" fill="#c8525f" transform="rotate(-20 756.2 494.8)"/>
    <circle cx="757.8" cy="496.2" r="1.5" fill="#2a1e1f"/>
    <rect x="758.7" y="491.6" width="9.8" height="4.7" fill="#f1c0c2" transform="rotate(45 763.6 494)"/>
    <rect x="768.5" y="488.6" width="5.6" height="8.2" fill="#c8525f" transform="rotate(60 771.3 492.6)"/>
    <circle cx="770.3" cy="493.3" r="0.9" fill="#f7e6e2"/>
    <rect x="775.2" y="489.7" width="5.1" height="7" fill="#f8efec" transform="rotate(-35 777.7 493.1)"/>
    <rect x="784.8" y="488.3" width="8.4" height="8.6" fill="#d97886" transform="rotate(60 789 492.6)"/>
    <rect x="790" y="492.6" width="10" height="4.6" fill="#c8525f" transform="rotate(-35 795 494.9)"/>
    <rect x="799.4" y="489.3" width="7.1" height="5.6" fill="#d97886" transform="rotate(-20 803 492.1)"/>
    <rect x="804.3" y="490.8" width="10.9" height="6.2" fill="#e58f9a" transform="rotate(-20 809.8 493.9)"/>
    <circle cx="813.3" cy="496.1" r="1.5" fill="#f7e6e2"/>
    <rect x="814.2" y="488.5" width="6.5" height="9" fill="#e9a3aa" transform="rotate(0 817.5 493)"/>
    <rect x="821.3" y="490.2" width="7.9" height="4.2" fill="#1f1718" transform="rotate(45 825.2 492.2)"/>
    <circle cx="828" cy="495" r="1.1" fill="#f7e6e2"/>
    <rect x="827.5" y="490.6" width="8.7" height="4.4" fill="#e9a3aa" transform="rotate(-20 831.8 492.8)"/>
    <circle cx="830.7" cy="492.6" r="1" fill="#f7e6e2"/>
    <rect x="836.4" y="488.6" width="5" height="6.9" fill="#f1c0c2" transform="rotate(-35 838.9 492)"/>
    <rect x="843.1" y="492.9" width="5.9" height="5.9" fill="#f1c0c2" transform="rotate(30 846 495.9)"/>
    <circle cx="843.1" cy="497.1" r="1.5" fill="#2a1e1f"/>
    <rect x="851.1" y="489.5" width="8.8" height="7.2" fill="#231a1b" transform="rotate(45 855.5 493.1)"/>
    <circle cx="859.2" cy="492.1" r="1.2" fill="#c8525f"/>
    <rect x="860" y="488.8" width="7.1" height="6.8" fill="#f8efec" transform="rotate(60 863.6 492.2)"/>
    <circle cx="862.5" cy="490.6" r="1.6" fill="#fff5f2"/>
    <rect x="868" y="489.3" width="6.2" height="8.4" fill="#e58f9a" transform="rotate(-20 871.1 493.6)"/>
    <circle cx="868.3" cy="494.9" r="1.4" fill="#c8525f"/>
    <rect x="874.4" y="491.4" width="10.6" height="5.7" fill="#231a1b" transform="rotate(0 879.8 494.3)"/>
    <circle cx="883.7" cy="493.4" r="1.3" fill="#f7e6e2"/>
    <rect x="880.5" y="492.7" width="10" height="5.6" fill="#231a1b" transform="rotate(45 885.5 495.5)"/>
    <circle cx="887.2" cy="493.8" r="1.1" fill="#f7e6e2"/>
    <rect x="890.6" y="489.7" width="6.7" height="6.5" fill="#231a1b" transform="rotate(30 893.9 492.9)"/>
    <circle cx="890.5" cy="494.8" r="1.3" fill="#c8525f"/>
    <rect x="896.3" y="489.6" width="6.6" height="7.2" fill="#f8efec" transform="rotate(0 899.6 493.2)"/>
    <rect x="904.9" y="489.1" width="7.9" height="7" fill="#f1c0c2" transform="rotate(45 908.8 492.6)"/>
    <rect x="912.2" y="492.4" width="10.9" height="6" fill="#f8efec" transform="rotate(30 917.7 495.4)"/>
    <rect x="920.5" y="488.8" width="7.5" height="7.6" fill="#2e2223" transform="rotate(-20 924.2 492.6)"/>
    <circle cx="926.9" cy="491.7" r="1.1" fill="#c8525f"/>
    <rect x="926.9" y="491" width="8.5" height="6.8" fill="#f1c0c2" transform="rotate(0 931.1 494.4)"/>
    <rect x="935.9" y="490.5" width="5.2" height="7.2" fill="#8a5a5c" transform="rotate(0 938.5 494.1)"/>
    <circle cx="938.8" cy="492.8" r="0.7" fill="#c8525f"/>
    <rect x="940.3" y="492" width="8.9" height="7.9" fill="#f5e4e0" transform="rotate(-35 944.8 495.9)"/>
    <rect x="948.7" y="490.5" width="8.3" height="5" fill="#231a1b" transform="rotate(-20 952.8 493)"/>
    <rect x="954.9" y="491.5" width="9.7" height="6.6" fill="#d97886" transform="rotate(-20 959.7 494.8)"/>
    <rect x="721.7" y="496.2" width="7.8" height="5.6" fill="#f1c0c2" transform="rotate(60 725.6 499)"/>
    <rect x="726.4" y="498" width="10.2" height="4.3" fill="#e58f9a" transform="rotate(-35 731.5 500.2)"/>
    <circle cx="729.6" cy="499.8" r="1" fill="#fff5f2"/>
    <rect x="735.9" y="497.8" width="7.6" height="5.4" fill="#f7e6e2" transform="rotate(15 739.7 500.5)"/>
    <rect x="744.8" y="495.8" width="6.6" height="7.8" fill="#c8525f" transform="rotate(60 748.1 499.7)"/>
    <rect x="748.5" y="497.4" width="9.1" height="7" fill="#e58f9a" transform="rotate(60 753.1 500.9)"/>
    <rect x="754.2" y="497.8" width="9.7" height="8.3" fill="#f4d3d2" transform="rotate(45 759.1 502)"/>
    <circle cx="756" cy="504.8" r="0.8" fill="#2a1e1f"/>
    <rect x="764.3" y="497.5" width="8" height="5.8" fill="#f8efec" transform="rotate(0 768.3 500.4)"/>
    <rect x="773.2" y="498" width="7.4" height="5.7" fill="#e9a3aa" transform="rotate(-35 776.8 500.9)"/>
    <circle cx="777.6" cy="501.3" r="1.4" fill="#2a1e1f"/>
    <rect x="774.7" y="500.2" width="10.4" height="4.3" fill="#f8efec" transform="rotate(-35 779.8 502.4)"/>
    <circle cx="781.3" cy="500.3" r="1.2" fill="#2a1e1f"/>
    <rect x="786.4" y="499.8" width="10.7" height="4.4" fill="#f1c0c2" transform="rotate(0 791.8 502)"/>
    <rect x="791.4" y="494.3" width="6.6" height="8.8" fill="#f8efec" transform="rotate(0 794.8 498.7)"/>
    <circle cx="796.3" cy="499.7" r="1.2" fill="#c8525f"/>
    <rect x="799.5" y="496" width="10.9" height="8.4" fill="#3a2a2b" transform="rotate(15 804.9 500.1)"/>
    <rect x="806.1" y="499.5" width="7.3" height="6" fill="#f1c0c2" transform="rotate(30 809.8 502.5)"/>
    <rect x="812.6" y="496.4" width="8.7" height="5.9" fill="#f1c0c2" transform="rotate(60 816.9 499.3)"/>
    <circle cx="818.7" cy="498.8" r="1.3" fill="#c8525f"/>
    <rect x="821.1" y="497.3" width="9" height="6.3" fill="#d97886" transform="rotate(30 825.6 500.4)"/>
    <circle cx="826" cy="499.7" r="1" fill="#f7e6e2"/>
    <rect x="826.7" y="499.2" width="10.9" height="5.3" fill="#8a5a5c" transform="rotate(45 832.1 501.8)"/>
    <circle cx="833" cy="500.4" r="1.5" fill="#f7e6e2"/>
    <rect x="836.3" y="495.4" width="8.5" height="6.9" fill="#f8efec" transform="rotate(30 840.5 498.8)"/>
    <circle cx="837.9" cy="498" r="0.8" fill="#fff5f2"/>
    <rect x="844.9" y="496.8" width="6.1" height="8.7" fill="#d97886" transform="rotate(60 847.9 501.2)"/>
    <rect x="849.6" y="496.2" width="7.5" height="7.5" fill="#8a5a5c" transform="rotate(30 853.3 500)"/>
    <circle cx="854.6" cy="498.7" r="1.6" fill="#c8525f"/>
    <rect x="859.2" y="498.4" width="7.7" height="6.4" fill="#1f1718" transform="rotate(-20 863.1 501.6)"/>
    <circle cx="863.2" cy="500" r="1.2" fill="#c8525f"/>
    <rect x="865" y="496.2" width="6.5" height="6.8" fill="#e58f9a" transform="rotate(45 868.3 499.6)"/>
    <circle cx="871.6" cy="498.1" r="1.5" fill="#c8525f"/>
    <rect x="871" y="496.1" width="8.8" height="8.3" fill="#f1c0c2" transform="rotate(60 875.4 500.2)"/>
    <circle cx="871.7" cy="499.9" r="0.7" fill="#c8525f"/>
    <rect x="879.8" y="496.5" width="10.8" height="6.2" fill="#f1c0c2" transform="rotate(-20 885.3 499.6)"/>
    <rect x="885.5" y="497.4" width="10.8" height="7.6" fill="#f5e4e0" transform="rotate(-35 890.9 501.2)"/>
    <rect x="896.1" y="498.3" width="8.2" height="6.5" fill="#f1c0c2" transform="rotate(30 900.1 501.6)"/>
    <circle cx="899.8" cy="503.6" r="1.6" fill="#f7e6e2"/>
    <rect x="900.9" y="498.6" width="5.4" height="6" fill="#2e2223" transform="rotate(45 903.6 501.6)"/>
    <circle cx="903.9" cy="504.1" r="1.2" fill="#c8525f"/>
    <rect x="907.4" y="496.6" width="9.6" height="4.6" fill="#f5e4e0" transform="rotate(15 912.3 498.9)"/>
    <circle cx="914.3" cy="499.2" r="1.4" fill="#2a1e1f"/>
    <rect x="916.7" y="497.4" width="7" height="8.3" fill="#231a1b" transform="rotate(15 920.2 501.5)"/>
    <rect x="925.7" y="495.7" width="5.9" height="5.7" fill="#f4d3d2" transform="rotate(-35 928.7 498.6)"/>
    <circle cx="926.7" cy="500.7" r="1.2" fill="#f7e6e2"/>
    <rect x="934.7" y="499" width="5.3" height="5.5" fill="#e58f9a" transform="rotate(-20 937.3 501.8)"/>
    <circle cx="937.6" cy="501" r="1.3" fill="#f7e6e2"/>
    <rect x="940.4" y="496" width="5.8" height="8.7" fill="#1f1718" transform="rotate(-35 943.3 500.4)"/>
    <rect x="948.6" y="494.3" width="5.4" height="8.8" fill="#d97886" transform="rotate(0 951.3 498.7)"/>
    <circle cx="949" cy="501.5" r="1.1" fill="#f7e6e2"/>
    <rect x="953.8" y="499.5" width="6.2" height="5" fill="#231a1b" transform="rotate(60 956.9 502)"/>
    <rect x="722.4" y="501.4" width="5.1" height="7.6" fill="#f4d3d2" transform="rotate(60 724.9 505.2)"/>
    <circle cx="727.7" cy="503.1" r="1.2" fill="#fff5f2"/>
    <rect x="726.5" y="503.2" width="6.2" height="4.5" fill="#c8525f" transform="rotate(45 729.6 505.4)"/>
    <circle cx="732.5" cy="508" r="0.7" fill="#fff5f2"/>
    <rect x="736.9" y="503.2" width="6.8" height="5.2" fill="#f7e6e2" transform="rotate(0 740.2 505.8)"/>
    <rect x="743.1" y="506.1" width="10" height="4.8" fill="#e9a3aa" transform="rotate(0 748.1 508.5)"/>
    <circle cx="749.2" cy="506.8" r="0.9" fill="#2a1e1f"/>
    <rect x="749.9" y="501.9" width="6.1" height="5.7" fill="#e58f9a" transform="rotate(45 752.9 504.7)"/>
    <rect x="758.5" y="503.7" width="6.7" height="5.7" fill="#f1c0c2" transform="rotate(-20 761.9 506.5)"/>
    <circle cx="764.8" cy="507.1" r="0.9" fill="#2a1e1f"/>
    <rect x="765.1" y="502.9" width="9.6" height="7.8" fill="#f1c0c2" transform="rotate(-35 769.9 506.9)"/>
    <circle cx="773.5" cy="507.8" r="0.9" fill="#2a1e1f"/>
    <rect x="770.9" y="502.2" width="7.9" height="5.6" fill="#f1c0c2" transform="rotate(45 774.8 505)"/>
    <circle cx="771.6" cy="505.3" r="1.2" fill="#fff5f2"/>
    <rect x="778.5" y="503.8" width="5.2" height="6.6" fill="#f1c0c2" transform="rotate(60 781.1 507.1)"/>
    <circle cx="780.1" cy="508.1" r="1" fill="#fff5f2"/>
    <rect x="788.5" y="505.9" width="5.5" height="4" fill="#e58f9a" transform="rotate(-35 791.3 507.9)"/>
    <circle cx="789.2" cy="505.8" r="1.2" fill="#c8525f"/>
    <rect x="793.3" y="504.2" width="7.8" height="4.8" fill="#2e2223" transform="rotate(0 797.2 506.6)"/>
    <circle cx="794.9" cy="504.3" r="1.4" fill="#fff5f2"/>
    <rect x="799.9" y="502.5" width="6.4" height="4.5" fill="#f1c0c2" transform="rotate(-20 803.1 504.8)"/>
    <rect x="805.7" y="502.3" width="9.5" height="4.8" fill="#8a5a5c" transform="rotate(-35 810.4 504.7)"/>
    <circle cx="813.6" cy="502.2" r="0.9" fill="#fff5f2"/>
    <rect x="812.6" y="501.7" width="9.7" height="7.6" fill="#f5e4e0" transform="rotate(-35 817.4 505.5)"/>
    <circle cx="819.6" cy="503.6" r="1" fill="#c8525f"/>
    <rect x="821.8" y="504" width="7.8" height="8.6" fill="#3a2a2b" transform="rotate(-35 825.6 508.3)"/>
    <circle cx="823.6" cy="509.7" r="0.8" fill="#fff5f2"/>
    <rect x="830.6" y="503.4" width="5.8" height="5" fill="#c8525f" transform="rotate(-35 833.5 505.9)"/>
    <circle cx="835.7" cy="508.3" r="0.9" fill="#2a1e1f"/>
    <rect x="835.8" y="503.4" width="10.1" height="7.9" fill="#231a1b" transform="rotate(60 840.9 507.4)"/>
    <rect x="847.1" y="506" width="9.5" height="4.7" fill="#f7e6e2" transform="rotate(15 851.8 508.3)"/>
    <circle cx="853" cy="510.9" r="1.4" fill="#c8525f"/>
    <rect x="852.1" y="504.1" width="8.9" height="7.2" fill="#2e2223" transform="rotate(-20 856.6 507.7)"/>
    <circle cx="856.2" cy="506.1" r="1.2" fill="#f7e6e2"/>
    <rect x="862.6" y="504" width="10.3" height="4.3" fill="#f8efec" transform="rotate(60 867.8 506.1)"/>
    <circle cx="871.3" cy="504.5" r="1.3" fill="#c8525f"/>
    <rect x="871.2" y="504.2" width="7.6" height="5.5" fill="#c8525f" transform="rotate(15 875 507)"/>
    <circle cx="873.4" cy="504.8" r="0.8" fill="#fff5f2"/>
    <rect x="878.4" y="506.4" width="7.8" height="4.2" fill="#d97886" transform="rotate(15 882.3 508.5)"/>
    <rect x="886.7" y="504.1" width="5.7" height="7.4" fill="#e58f9a" transform="rotate(0 889.6 507.8)"/>
    <rect x="895.8" y="503.9" width="6.3" height="8.4" fill="#d97886" transform="rotate(0 899 508.1)"/>
    <rect x="901.9" y="502.7" width="10.9" height="4.9" fill="#e9a3aa" transform="rotate(60 907.4 505.2)"/>
    <circle cx="910.9" cy="504.9" r="1.4" fill="#c8525f"/>
    <rect x="909.6" y="503.4" width="10.9" height="7.7" fill="#e58f9a" transform="rotate(45 915.1 507.2)"/>
    <circle cx="915.2" cy="506.2" r="1.6" fill="#c8525f"/>
    <rect x="916.2" y="503" width="9" height="7.2" fill="#1f1718" transform="rotate(15 920.6 506.6)"/>
    <circle cx="922.2" cy="503.7" r="1.2" fill="#2a1e1f"/>
    <rect x="924.7" y="503.3" width="9.5" height="8.5" fill="#f8efec" transform="rotate(15 929.4 507.5)"/>
    <circle cx="933" cy="509.9" r="0.9" fill="#fff5f2"/>
    <rect x="931.9" y="502.4" width="8" height="9" fill="#e58f9a" transform="rotate(0 935.9 506.9)"/>
    <rect x="937.5" y="505.3" width="8.3" height="6" fill="#d97886" transform="rotate(45 941.7 508.3)"/>
    <circle cx="944.9" cy="507.3" r="1.4" fill="#f7e6e2"/>
    <rect x="948.2" y="505.7" width="7.1" height="4.7" fill="#8a5a5c" transform="rotate(-20 951.8 508)"/>
    <rect x="957.3" y="501.6" width="8.5" height="8.9" fill="#e58f9a" transform="rotate(0 961.5 506)"/>
    <rect x="719.4" y="509.2" width="10.6" height="6" fill="#c8525f" transform="rotate(0 724.7 512.2)"/>
    <circle cx="728.1" cy="513" r="1.3" fill="#f7e6e2"/>
    <rect x="729.9" y="510.3" width="6.9" height="4.8" fill="#f8efec" transform="rotate(60 733.4 512.7)"/>
    <circle cx="732.5" cy="514" r="1.2" fill="#f7e6e2"/>
    <rect x="735.9" y="508.3" width="8.8" height="5.3" fill="#f4d3d2" transform="rotate(0 740.3 510.9)"/>
    <rect x="742.3" y="507" width="10.9" height="8.4" fill="#f8efec" transform="rotate(60 747.8 511.2)"/>
    <rect x="751.1" y="509.7" width="6.8" height="7.2" fill="#f8efec" transform="rotate(15 754.5 513.3)"/>
    <rect x="756" y="509.1" width="10" height="6" fill="#f7e6e2" transform="rotate(30 761 512.1)"/>
    <rect x="761.8" y="510.8" width="10.6" height="5.4" fill="#f1c0c2" transform="rotate(30 767.1 513.5)"/>
    <circle cx="767.7" cy="511.9" r="1.1" fill="#f7e6e2"/>
    <rect x="773.8" y="510" width="6.6" height="8.2" fill="#1f1718" transform="rotate(60 777.1 514.1)"/>
    <rect x="779.2" y="509.8" width="10.4" height="8.5" fill="#e58f9a" transform="rotate(-20 784.4 514.1)"/>
    <rect x="789.3" y="509.6" width="7.3" height="8.5" fill="#8a5a5c" transform="rotate(0 792.9 513.9)"/>
    <rect x="797.6" y="511.4" width="6.9" height="5.8" fill="#e9a3aa" transform="rotate(45 801.1 514.3)"/>
    <circle cx="798" cy="517.1" r="0.7" fill="#fff5f2"/>
    <rect x="804" y="509.9" width="5.8" height="5.4" fill="#e9a3aa" transform="rotate(-35 806.9 512.6)"/>
    <circle cx="806.7" cy="512.5" r="1.3" fill="#c8525f"/>
    <rect x="811.1" y="510.5" width="7" height="6.8" fill="#f1c0c2" transform="rotate(30 814.6 514)"/>
    <rect x="818.4" y="508.3" width="6" height="8.1" fill="#f1c0c2" transform="rotate(30 821.4 512.3)"/>
    <circle cx="820.6" cy="515" r="0.9" fill="#f7e6e2"/>
    <rect x="827.3" y="508.1" width="11" height="8" fill="#d97886" transform="rotate(30 832.8 512.1)"/>
    <circle cx="832.4" cy="513.2" r="0.9" fill="#f7e6e2"/>
    <rect x="837" y="508.7" width="5.7" height="4.8" fill="#2e2223" transform="rotate(60 839.9 511.1)"/>
    <rect x="842.9" y="511.3" width="6.6" height="6.8" fill="#e9a3aa" transform="rotate(45 846.2 514.7)"/>
    <rect x="848.9" y="511.7" width="5.4" height="5" fill="#1f1718" transform="rotate(30 851.6 514.2)"/>
    <circle cx="850.5" cy="512.2" r="1.6" fill="#c8525f"/>
    <rect x="857.3" y="511.9" width="5.3" height="4.9" fill="#d97886" transform="rotate(60 859.9 514.4)"/>
    <circle cx="856.8" cy="512.3" r="1.1" fill="#f7e6e2"/>
    <rect x="864.8" y="511.9" width="7" height="5.6" fill="#8a5a5c" transform="rotate(30 868.3 514.7)"/>
    <circle cx="867.4" cy="513.8" r="1.5" fill="#2a1e1f"/>
    <rect x="870" y="509.8" width="6.7" height="8.1" fill="#231a1b" transform="rotate(60 873.4 513.9)"/>
    <rect x="878.6" y="510.6" width="5.8" height="4.6" fill="#f5e4e0" transform="rotate(15 881.5 512.9)"/>
    <rect x="884.4" y="507.8" width="8.4" height="8.6" fill="#d97886" transform="rotate(15 888.7 512.1)"/>
    <rect x="892.8" y="511.8" width="5" height="5" fill="#231a1b" transform="rotate(-20 895.4 514.3)"/>
    <circle cx="895.9" cy="516.8" r="1.4" fill="#f7e6e2"/>
    <rect x="897.7" y="509.2" width="9.3" height="8.3" fill="#c8525f" transform="rotate(45 902.3 513.4)"/>
    <rect x="908.1" y="510.3" width="5.7" height="6.5" fill="#2e2223" transform="rotate(-35 911 513.6)"/>
    <circle cx="913.3" cy="515.5" r="0.9" fill="#2a1e1f"/>
    <rect x="917" y="510.4" width="6.2" height="4" fill="#e9a3aa" transform="rotate(30 920.1 512.4)"/>
    <rect x="923.7" y="511.4" width="6.6" height="4.8" fill="#f5e4e0" transform="rotate(-20 927 513.8)"/>
    <circle cx="927.3" cy="514.5" r="0.8" fill="#c8525f"/>
    <rect x="930.2" y="509.9" width="10.3" height="8.6" fill="#f5e4e0" transform="rotate(30 935.3 514.2)"/>
    <circle cx="936.2" cy="515.9" r="1.3" fill="#2a1e1f"/>
    <rect x="941.6" y="509.9" width="8.7" height="6.3" fill="#231a1b" transform="rotate(60 946 513)"/>
    <circle cx="948.7" cy="511.3" r="1.3" fill="#fff5f2"/>
    <rect x="950" y="511.3" width="8.7" height="4.4" fill="#2e2223" transform="rotate(60 954.3 513.5)"/>
    <rect x="959.7" y="509.3" width="5.5" height="5.4" fill="#f1c0c2" transform="rotate(0 962.4 512)"/>
    <rect x="721.6" y="514.3" width="5.7" height="7.5" fill="#f8efec" transform="rotate(30 724.4 518)"/>
    <circle cx="722.1" cy="519.6" r="1.5" fill="#2a1e1f"/>
    <rect x="728.6" y="517.3" width="9.3" height="4.2" fill="#e9a3aa" transform="rotate(-20 733.2 519.3)"/>
    <rect x="737.3" y="517" width="6.5" height="4.7" fill="#3a2a2b" transform="rotate(-35 740.5 519.3)"/>
    <circle cx="737.8" cy="522" r="1.4" fill="#f7e6e2"/>
    <rect x="741.5" y="513" width="11" height="7.8" fill="#e9a3aa" transform="rotate(0 747 516.9)"/>
    <circle cx="750.1" cy="519.5" r="0.7" fill="#c8525f"/>
    <rect x="751.3" y="513.7" width="6.4" height="5.7" fill="#f8efec" transform="rotate(15 754.5 516.6)"/>
    <rect x="757.8" y="513.6" width="8.2" height="8.8" fill="#e58f9a" transform="rotate(15 762 518.1)"/>
    <rect x="766.6" y="513.2" width="9.7" height="7.2" fill="#e9a3aa" transform="rotate(45 771.5 516.8)"/>
    <circle cx="773.2" cy="519.7" r="1.2" fill="#fff5f2"/>
    <rect x="774.9" y="513.1" width="6" height="8.7" fill="#e9a3aa" transform="rotate(-35 777.9 517.5)"/>
    <rect x="782.6" y="513.9" width="6.6" height="8.8" fill="#f1c0c2" transform="rotate(-35 785.9 518.3)"/>
    <rect x="787.6" y="515.2" width="5.4" height="4.3" fill="#f5e4e0" transform="rotate(45 790.3 517.4)"/>
    <circle cx="794.1" cy="518.5" r="1.5" fill="#c8525f"/>
    <rect x="794" y="516.1" width="10.4" height="5.3" fill="#f5e4e0" transform="rotate(60 799.2 518.7)"/>
    <rect x="803" y="514.8" width="10" height="4.2" fill="#d97886" transform="rotate(0 807.9 516.8)"/>
    <rect x="813.6" y="516.4" width="5.4" height="4.4" fill="#e58f9a" transform="rotate(-20 816.3 518.6)"/>
    <circle cx="816.2" cy="520.6" r="1" fill="#2a1e1f"/>
    <rect x="817.2" y="513.4" width="8.4" height="5.1" fill="#f8efec" transform="rotate(0 821.4 516)"/>
    <circle cx="818.8" cy="515.2" r="1" fill="#c8525f"/>
    <rect x="826.8" y="512.4" width="9" height="8.4" fill="#e9a3aa" transform="rotate(-20 831.3 516.6)"/>
    <rect x="832.5" y="515.4" width="9.6" height="8.3" fill="#e9a3aa" transform="rotate(-35 837.2 519.5)"/>
    <circle cx="836.3" cy="518.7" r="0.7" fill="#c8525f"/>
    <rect x="843.6" y="513.2" width="5.7" height="6.3" fill="#d97886" transform="rotate(-20 846.4 516.3)"/>
    <rect x="849.3" y="515.2" width="5.4" height="5" fill="#f8efec" transform="rotate(30 851.9 517.7)"/>
    <circle cx="852" cy="517.6" r="1.2" fill="#fff5f2"/>
    <rect x="854.5" y="515.6" width="10.8" height="8.3" fill="#2e2223" transform="rotate(30 859.9 519.7)"/>
    <circle cx="862.8" cy="518" r="1.1" fill="#2a1e1f"/>
    <rect x="862.1" y="515.2" width="10.7" height="7.9" fill="#f5e4e0" transform="rotate(-20 867.4 519.2)"/>
    <circle cx="869.7" cy="516.6" r="1.1" fill="#f7e6e2"/>
    <rect x="873" y="512.4" width="5.1" height="7.3" fill="#e9a3aa" transform="rotate(30 875.5 516)"/>
    <rect x="878.7" y="515.1" width="9" height="4.7" fill="#e9a3aa" transform="rotate(60 883.2 517.5)"/>
    <rect x="885.3" y="514" width="8.9" height="7.5" fill="#d97886" transform="rotate(-20 889.8 517.8)"/>
    <rect x="892.4" y="513.1" width="10.9" height="8.2" fill="#f5e4e0" transform="rotate(15 897.8 517.2)"/>
    <circle cx="895.1" cy="516.3" r="0.9" fill="#f7e6e2"/>
    <rect x="901.9" y="515.5" width="8.1" height="8.7" fill="#2e2223" transform="rotate(-20 906 519.9)"/>
    <rect x="906" y="516.6" width="11" height="6.3" fill="#3a2a2b" transform="rotate(-20 911.5 519.8)"/>
    <circle cx="912.9" cy="516.9" r="1.4" fill="#c8525f"/>
    <rect x="915.6" y="516" width="10" height="4.8" fill="#8a5a5c" transform="rotate(45 920.6 518.4)"/>
    <circle cx="918.7" cy="518.7" r="1.6" fill="#c8525f"/>
    <rect x="923.2" y="516.2" width="5.8" height="6.6" fill="#2e2223" transform="rotate(15 926.1 519.5)"/>
    <circle cx="926.8" cy="519.2" r="0.9" fill="#f7e6e2"/>
    <rect x="931.3" y="517.4" width="6.3" height="4.8" fill="#f5e4e0" transform="rotate(-35 934.5 519.8)"/>
    <circle cx="937" cy="522.6" r="0.8" fill="#c8525f"/>
    <rect x="937" y="515.1" width="6.1" height="4.7" fill="#1f1718" transform="rotate(45 940 517.4)"/>
    <rect x="945.8" y="515.4" width="7.7" height="6.5" fill="#8a5a5c" transform="rotate(30 949.6 518.6)"/>
    <circle cx="946.2" cy="521" r="0.9" fill="#f7e6e2"/>
    <rect x="953.8" y="515.4" width="6.5" height="5.2" fill="#f5e4e0" transform="rotate(45 957 518)"/>
    <rect x="717.5" y="519.8" width="9" height="8" fill="#f7e6e2" transform="rotate(15 722 523.8)"/>
    <rect x="731" y="519.6" width="6.4" height="6.2" fill="#f7e6e2" transform="rotate(45 734.2 522.7)"/>
    <circle cx="736.1" cy="521.9" r="1.4" fill="#f7e6e2"/>
    <rect x="734.6" y="519.5" width="6.3" height="5.1" fill="#3a2a2b" transform="rotate(30 737.8 522)"/>
    <circle cx="734.4" cy="522.5" r="1.2" fill="#c8525f"/>
    <rect x="739.9" y="520.7" width="9.2" height="6.2" fill="#1f1718" transform="rotate(60 744.5 523.8)"/>
    <circle cx="743.5" cy="526.6" r="1.5" fill="#c8525f"/>
    <rect x="751.2" y="518.9" width="8.8" height="7.5" fill="#f4d3d2" transform="rotate(45 755.6 522.7)"/>
    <circle cx="758.2" cy="523.3" r="0.9" fill="#2a1e1f"/>
    <rect x="754.8" y="518.3" width="8.2" height="7.6" fill="#231a1b" transform="rotate(-35 758.9 522.2)"/>
    <rect x="763.4" y="523.2" width="6.4" height="5.3" fill="#f5e4e0" transform="rotate(-35 766.6 525.8)"/>
    <rect x="771.8" y="520.3" width="5.9" height="5.7" fill="#d97886" transform="rotate(60 774.8 523.2)"/>
    <circle cx="771.2" cy="520.7" r="0.9" fill="#fff5f2"/>
    <rect x="776.8" y="520.9" width="5.3" height="8.9" fill="#8a5a5c" transform="rotate(15 779.4 525.3)"/>
    <circle cx="780.3" cy="528.3" r="1.4" fill="#2a1e1f"/>
    <rect x="783.7" y="520.4" width="7.5" height="5.5" fill="#d97886" transform="rotate(-35 787.5 523.1)"/>
    <circle cx="784.7" cy="524.9" r="1.4" fill="#f7e6e2"/>
    <rect x="795.2" y="521.9" width="6.4" height="4.5" fill="#2e2223" transform="rotate(30 798.4 524.1)"/>
    <circle cx="801.2" cy="523.9" r="1.2" fill="#c8525f"/>
    <rect x="800.8" y="519.8" width="7" height="4.3" fill="#2e2223" transform="rotate(45 804.3 522)"/>
    <rect x="811.6" y="523.4" width="6.2" height="4.9" fill="#e9a3aa" transform="rotate(-20 814.7 525.9)"/>
    <circle cx="813.4" cy="527.1" r="1.1" fill="#c8525f"/>
    <rect x="816.1" y="519.1" width="6.8" height="7.9" fill="#2e2223" transform="rotate(-20 819.5 523)"/>
    <circle cx="820.6" cy="521.5" r="0.9" fill="#2a1e1f"/>
    <rect x="822.1" y="521.4" width="8" height="6.6" fill="#f5e4e0" transform="rotate(-35 826.1 524.7)"/>
    <rect x="831.9" y="521.8" width="7.6" height="4.3" fill="#d97886" transform="rotate(45 835.7 523.9)"/>
    <circle cx="837.4" cy="524.1" r="1.3" fill="#c8525f"/>
    <rect x="836.1" y="518.4" width="7.7" height="7.2" fill="#f7e6e2" transform="rotate(-35 839.9 522)"/>
    <circle cx="840.9" cy="520.8" r="1.5" fill="#2a1e1f"/>
    <rect x="843.9" y="521.4" width="7" height="6.6" fill="#e9a3aa" transform="rotate(-35 847.4 524.7)"/>
    <circle cx="849.5" cy="522.5" r="1.3" fill="#2a1e1f"/>
    <rect x="850.4" y="519.3" width="9.9" height="7" fill="#3a2a2b" transform="rotate(45 855.4 522.8)"/>
    <circle cx="852.4" cy="521.3" r="0.8" fill="#2a1e1f"/>
    <rect x="858.8" y="519" width="10.6" height="7.6" fill="#e58f9a" transform="rotate(60 864.1 522.8)"/>
    <circle cx="865.9" cy="524.2" r="1.4" fill="#fff5f2"/>
    <rect x="869.4" y="520.9" width="7.9" height="8.3" fill="#8a5a5c" transform="rotate(15 873.4 525.1)"/>
    <rect x="875.2" y="521.3" width="10.9" height="7.1" fill="#1f1718" transform="rotate(-20 880.7 524.8)"/>
    <rect x="884.5" y="522.4" width="5" height="5.2" fill="#e9a3aa" transform="rotate(-35 887 525)"/>
    <rect x="888.6" y="519.3" width="10.1" height="8.1" fill="#f8efec" transform="rotate(15 893.6 523.3)"/>
    <circle cx="890.5" cy="521.7" r="1.4" fill="#f7e6e2"/>
    <rect x="899.9" y="520.2" width="8.4" height="8.6" fill="#231a1b" transform="rotate(60 904.1 524.5)"/>
    <circle cx="902.6" cy="524.5" r="1" fill="#c8525f"/>
    <rect x="907.8" y="521.8" width="5.8" height="6.7" fill="#231a1b" transform="rotate(60 910.7 525.2)"/>
    <circle cx="912.9" cy="527.3" r="1.4" fill="#2a1e1f"/>
    <rect x="914.4" y="519.4" width="10.9" height="8.7" fill="#2e2223" transform="rotate(45 919.8 523.7)"/>
    <circle cx="917.8" cy="521.3" r="1.5" fill="#c8525f"/>
    <rect x="926.5" y="520.9" width="5.2" height="5.9" fill="#d97886" transform="rotate(45 929.1 523.9)"/>
    <circle cx="931.5" cy="526.6" r="1.3" fill="#c8525f"/>
    <rect x="932.4" y="522.4" width="8.5" height="5.6" fill="#f8efec" transform="rotate(30 936.7 525.2)"/>
    <rect x="937.9" y="519.4" width="11" height="8.5" fill="#1f1718" transform="rotate(-20 943.4 523.7)"/>
    <circle cx="942.3" cy="522.8" r="1.3" fill="#2a1e1f"/>
    <rect x="947" y="519" width="7.8" height="6.8" fill="#f4d3d2" transform="rotate(60 950.9 522.4)"/>
    <circle cx="952.8" cy="520" r="0.9" fill="#2a1e1f"/>
    <rect x="955.5" y="521.6" width="11" height="6.2" fill="#f4d3d2" transform="rotate(0 961 524.7)"/>
    <circle cx="964.7" cy="524.7" r="1.3" fill="#2a1e1f"/>
    <!-- collar highlights -->
    <path d="M880 456 L900 452 L932 464.700 L905 474 L890 486 L858 496 L846 512Z" fill="#f3c9cb" opacity="0.550"/>
    <path d="M818 458 L808 466 L822 500 L843 514Z" fill="#eeb4b9" opacity="0.550"/>
    <path d="M888 470 L935 466 L938 469 L892 476Z" fill="#a8787a" opacity="0.700"/>
   </g></g>
   <g filter="url(#pb)">
    <!-- neck -->
    <path d="M815 446 L882 444 L880 457 L844 511.500 L814 462Z" fill="#efc5b2"/>
    <path d="M818 452 C830 464 864 464 880 450 L880 455 C864 468 832 468 819 457Z" fill="#e4b49f"/>
    <!-- face -->
    <path d="M818.800 347.200 C830 337 860 338 871.800 353 C882 362 889 378 891.500 394 C893 410 888 428 880.400 436 C870 450 856 459 844 459 C832 459 820 448 811.600 433 C806 422 803.500 408 804.500 396 C806 376 810 358 818.800 347.200Z" fill="url(#wskin)"/>
    <!-- hair front -->
    <path d="M846 318.600 C826 320 814 334 808 350 C802 366 800 384 801 406 C803 392 806 378 810 366 C814 356 818 351 823 346 C832 340 846 339 858 343 C868 347 878 356 884 370 C889 382 892 396 892.500 410 C897 392 897 372 891 356 C885 340 870 322 846 318.600Z" fill="#17110e"/>
    <path d="M823 346 C834 334 850 330 866 338 C852 336 836 338 823 346Z" fill="#17110e"/>
    <!-- hair left front lock -->
    <path d="M803 392 C801 420 801 440 804 460 C807 480 805 505 798 524 H757 C764 500 774 470 782 440 C788 420 794 400 799 382Z" fill="url(#hairg)"/>
    <!-- brows -->
    <path d="M811 381.500 C817 377 828 376.500 836.500 380.500 M853.500 380.500 C862 376.500 872 377 879.500 381.500" stroke="#5a3d30" stroke-width="2.500" fill="none" stroke-linecap="round"/>
    <!-- eyes -->
    <path d="M820 391.500 C823 388.500 829 388.500 832.500 391.500 C829 394 823 394 820 391.500Z" fill="#241713"/>
    <path d="M858.500 391.500 C862 388.500 868 388.500 871 391.500 C868 394 862 394 858.500 391.500Z" fill="#241713"/>
    <!-- nose -->
    <path d="M837.500 412.500 C840 416.500 843 414.500 846 416 C849 414.500 852 416.500 854.500 412.500" stroke="#cf957f" stroke-width="1.700" fill="none"/>
    <path d="M849 394 C850 402 851.500 407 853 410" stroke="#ecc5b2" stroke-width="1.600" fill="none"/>
    <!-- mouth -->
    <path d="M827.500 426 C835 428.500 854 428.500 862 425.500 C858 435.500 850 438.500 845 438.500 C838 438.500 832 435 827.500 426Z" fill="#df8580"/>
    <path d="M831.500 428 C838 429.800 852 429.800 858.500 427.600 C855 432.300 850 433.400 845 433.400 C840 433.400 835 432 831.500 428Z" fill="#efe6e4"/>
    <path d="M834 430.600 H856" stroke="#a9a3a8" stroke-width="0.900"/>
    <!-- cheeks / shading -->
    <ellipse cx="817" cy="414" rx="8" ry="6" fill="#f0b5a6" opacity="0.180"/>
    <ellipse cx="875" cy="414" rx="8" ry="6" fill="#f0b5a6" opacity="0.180"/>
    <path d="M826 448 C838 458 852 458 866 447" stroke="#e0b09a" stroke-width="2" fill="none" opacity="0.700"/>
    <!-- ear + earring -->
    <path d="M889 396 C893 396 893 410 888.500 415" stroke="#e6b7a2" stroke-width="2.500" fill="none"/>
    <path d="M886.500 416.500 C884 420.500 884.500 425.500 888 425.500 C891.500 425.500 892 420.500 889.500 416.500" stroke="#d7a544" stroke-width="1.700" fill="none"/>
   </g>
  </svg>

  <!-- ICMIAR -->
  <svg class="abs" style="left:774px;top:435px" width="117" height="66" viewBox="867 557 117 66">
   <defs>
    <filter id="ib" x="-5%" y="-5%" width="110%" height="110%"><feGaussianBlur stdDeviation="0.550"/></filter>
    <clipPath id="icc"><rect x="867.800" y="557.800" width="115.200" height="63"/></clipPath>
    <clipPath id="icd"><path d="M867.800 557.800 H975 L966 580 C976 592 982 606 983 620.800 H867.800Z"/></clipPath>
    <linearGradient id="tang" x1="0" y1="0" x2="1" y2="1"><stop offset="0" stop-color="#c2b29c"/><stop offset="1" stop-color="#ab9a8a"/></linearGradient>
   </defs>
   <g clip-path="url(#icc)"><g clip-path="url(#icd)" filter="url(#ib)">
    <rect x="867" y="557" width="117" height="65" fill="#fbfaf0"/>
    <path d="M868 588 L884 575 L880 612 L868 612Z" fill="#dfe27a"/>
    <!-- dome -->
    <path d="M882 621 C880 585 900 557 928 557 C958 557 983 585 983 621Z" fill="url(#tang)"/>
    <path d="M876 621 C874 590 886 568 905 558 L912 558 C896 572 888 596 890 621Z" fill="#5b98d6"/>
    <path d="M868 600 C872 596 876 596 880 600 L884 621 H868Z" fill="#7fa6cc"/>
    <path d="M895 563 L907 559 L900 568 L906 567 L893 580Z" fill="#a5573a"/>
    <path d="M905 590 V580 L909 576 V590 M913 590 V586 H919 V598 H913Z" stroke="#b07a5c" stroke-width="1.600" fill="#b98a70"/>
    <circle cx="897.500" cy="599" r="14" fill="#a6b7c6"/>
    <circle cx="897.500" cy="599" r="12.500" fill="#8296a8"/>
    <path d="M886 600 L889 596 L892 599 L895 594 L898 599 L902 595 L906 599 L909 597 V604 H886Z" fill="#4f5e6e"/>
    <path d="M886 604 H909 C906 610 890 610 886 604Z" fill="#93806e"/>
    <!-- blue -->
    <path d="M937 557 H976 L953 612 V622 H909 L918 600Z" fill="#1634ee"/>
    <path d="M937 557 H946 L922 612 L914 612Z" fill="#4a7be6"/>
    <path d="M926.700 585.400 L951.700 587 L951.700 604 L926.700 604Z" fill="#0c1660"/>
    <path d="M928 588 L950.500 589.500" stroke="#8da0e6" stroke-width="0.800"/>
    <ellipse cx="939" cy="602.500" rx="9.500" ry="2.600" fill="#35a2ff"/>
    <ellipse cx="939" cy="602.800" rx="5" ry="1.300" fill="#d6f2ff"/>
    <path d="M952 566 L940 588" stroke="#3a3c8c" stroke-width="1.100"/>
    <path d="M945 562 C940 567 940 577 945 582 M942 559.500 C935 567 935 578 942 585 M954 562 C959 567 959 577 954 582 M957 559.500 C964 567 964 578 957 585" stroke="#f0684a" stroke-width="1" fill="none"/>
    <!-- right inside dome -->
    <path d="M966 580 L953 612 V622 H984 V600 C980 590 974 584 966 580Z" fill="#9db1ca"/>
    <path d="M960 590 L966 584 L970 600 L964 610Z" fill="#66788e"/>
    <path d="M972 590 C975 600 976 610 975 621 H978 C978 610 977 598 974 588Z" fill="#d9e24a"/>
    <path d="M966 579 C976 590 983 606 983.500 622" stroke="#a9bfd9" stroke-width="1.600" fill="none"/>
    <!-- orange lower-left -->
    <path d="M868 621 L881.500 602 H913 L906 621Z" fill="#f07c1e"/>
    <path d="M868 606 L876 610 L868 621Z" fill="#6f9cc6"/>
   </g></g>
   <g transform="translate(0,619.600) scale(0.560,1)" font-family="'Liberation Sans',sans-serif" font-weight="bold" font-size="24.500" stroke-linejoin="round">
    <text x="1572.500 1589.500 1616.400 1648.700 1665.500 1696.500" y="0" fill="#fff" stroke="#fff" stroke-width="4.200">ICMIAR</text>
    <text x="1572.500 1589.500 1616.400 1648.700 1665.500 1696.500" y="0" fill="#e06f14" stroke="#e06f14" stroke-width="1.300">ICMIAR</text>
   </g>
  </svg>

  <!-- presenter controls -->
  <svg class="abs" style="left:0;top:480px" width="140" height="26" viewBox="0 480 140 26">
   <g fill="none" stroke="#fff" stroke-width="0.900" opacity="0.300">
    <circle cx="11.300" cy="494.300" r="8.200"/><circle cx="34" cy="494.300" r="8.200" opacity="1.600"/><circle cx="56.700" cy="494.300" r="8.200"/><circle cx="79.400" cy="494.300" r="8.200"/><circle cx="102" cy="494.300" r="8.200"/><circle cx="124.800" cy="494.300" r="8.200"/>
   </g>
   <g fill="#fff" opacity="0.320">
    <path d="M13.500 490.500 V498 L8 494.300Z"/>
    <path d="M52.800 497.800 L59.500 490.300 L61 491.600 L54.200 499Z"/>
    <rect x="75" y="490" width="3" height="2.500"/><rect x="79" y="490" width="5.500" height="2.500"/><rect x="75" y="493.500" width="3" height="2.500"/><rect x="79.500" y="493.700" width="5" height="5.500" fill="none" stroke="#fff" stroke-width="0.900"/>
    <circle cx="101" cy="493.300" r="3.300" fill="none" stroke="#fff" stroke-width="1.200"/><path d="M103.300 495.800 L106.300 499" stroke="#fff" stroke-width="1.300"/>
    <circle cx="121.300" cy="494.300" r="0.900"/><circle cx="124.800" cy="494.300" r="0.900"/><circle cx="128.300" cy="494.300" r="0.900"/>
   </g>
   <circle cx="34" cy="494.300" r="8.200" fill="none" stroke="#e8e8e8" stroke-width="1" opacity="0.800"/>
   <path d="M33.300 490.600 V502 L36 499.500 L38 504 L39.600 503.300 L37.700 499 H41.300Z" fill="#fff" stroke="#111" stroke-width="0.800" stroke-linejoin="round"/>
  </svg>
  <div class="t" id="s-l1" style="left:75.1px;top:219.5px;font-size:33.5px;color:#0a0a0a;transform:scaleX(0.981);-webkit-text-stroke:0.4px #0a0a0a">Problem-Based Learning Materials in</div>
  <div class="t" id="s-l2" style="left:75.4px;top:259.6px;font-size:33.5px;color:#0a0a0a;transform:scaleX(0.9764);-webkit-text-stroke:0.4px #0a0a0a">Upskilling of Critical Thinking Skills in</div>
  <div class="t" id="s-l3" style="left:75.2px;top:299.4px;font-size:33.5px;color:#0a0a0a;transform:scaleX(1.0228);-webkit-text-stroke:0.4px #0a0a0a">Mathematics</div>
  <div class="t" id="s-l4" style="left:75.3px;top:340.9px;font-size:24.4px;color:#0a0a0a;transform:scaleX(0.9963);-webkit-text-stroke:0.3px #0a0a0a">Ideza Carmela Magpantay</div>
 </div>
</div>

<!-- THUMBNAIL -->
<div class="abs" id="thumb" style="left:1091px;top:300px;width:269px;height:151px;overflow:hidden;background:#f6f4f2">
<svg class="abs" style="left:0;top:0" width="269" height="151" viewBox="1091 300 269 151">
 <defs>
  <filter id="b1" x="-10%" y="-10%" width="120%" height="120%"><feGaussianBlur stdDeviation="0.9"/></filter>
  <filter id="b2" x="-10%" y="-10%" width="120%" height="120%"><feGaussianBlur stdDeviation="0.5"/></filter>
  <filter id="b3" x="-20%" y="-20%" width="140%" height="140%"><feGaussianBlur stdDeviation="2"/></filter>
  <linearGradient id="thbg" x1="0" y1="0" x2="1" y2="1"><stop offset="0" stop-color="#fdfbf8"/><stop offset="0.5" stop-color="#faf9f8"/><stop offset="1" stop-color="#fbfafa"/></linearGradient>
  <radialGradient id="skin" cx="0.45" cy="0.35" r="0.7"><stop offset="0" stop-color="#dcb09f"/><stop offset="0.6" stop-color="#c99783"/><stop offset="1" stop-color="#a97b69"/></radialGradient>
 </defs>
 <rect x="1091" y="300" width="269" height="151" fill="url(#thbg)"/>
 <g filter="url(#b1)">
  <!-- shirt -->
  <path d="M1140 452 L1146 432 C1160 421 1178 413 1196 408 L1210 420 L1252 420 L1258 412 C1280 420 1300 430 1317 441 L1319 452Z" fill="#746b65"/>
  <path d="M1196 408 L1208 404 L1218 430 L1204 436Z" fill="#6a615b"/>
  <path d="M1250 410 L1258 412 L1262 436 L1246 432Z" fill="#5b554f"/>
  <path d="M1246 420 L1253 414 L1253 440 L1246 440Z" fill="#ece9e6"/>
  <path d="M1262 418 C1285 426 1303 436 1317 444 L1318 452 L1290 452Z" fill="#8a837d"/>
  <circle cx="1202" cy="422.800" r="1.300" fill="#3a3532"/>
  <!-- neck -->
  <path d="M1206 410 L1252 410 L1250 436 L1212 438Z" fill="#b98e7b"/>
  <!-- ears -->
  <ellipse cx="1194" cy="381" rx="3.500" ry="8" fill="#c09683"/>
  <ellipse cx="1264.500" cy="381" rx="3.500" ry="8" fill="#c09683"/>
  <!-- face -->
  <path d="M1196 352 C1196 338 1262 338 1262 352 L1263.500 385 C1263 405 1250 428 1230 428 C1208 428 1196 405 1195 385Z" fill="url(#skin)"/>
  <!-- hair -->
  <path d="M1193.500 372 C1189 340 1204 323 1230 323.500 C1255 323 1269 340 1263.800 372 C1261.500 362 1260.500 354 1257 347.500 C1251 349 1244 348 1238 348.500 C1234 352 1230 355 1226 354.500 C1220 353 1214 356 1208 355 C1204 354 1201 352 1199.500 351 C1197 357 1195.500 364 1193.500 372Z" fill="#1b1a26"/>
  <path d="M1205 335 C1215 326 1240 325 1252 333 C1245 331 1215 331 1205 335Z" fill="#2e3566"/>
  <!-- brows / eyes -->
  <path d="M1202 367 C1208 364.500 1216 364.500 1222 366.500 M1236 366.500 C1242 364.500 1250 364.500 1256 367" stroke="#4a3328" stroke-width="2" fill="none"/>
  <ellipse cx="1213" cy="375.500" rx="4" ry="1.600" fill="#3b2a25"/>
  <ellipse cx="1246" cy="375.500" rx="4" ry="1.600" fill="#3b2a25"/>
  <!-- nose / mouth -->
  <path d="M1222 392 C1226 395 1232 395 1236 392" stroke="#a97a68" stroke-width="1.800" fill="none"/>
  <path d="M1216 402 C1222 399 1236 399 1243 402" stroke="#7d5244" stroke-width="2.200" fill="none"/>
  <path d="M1219 405 C1225 407.500 1234 407.500 1240 405" stroke="#b3776d" stroke-width="2" fill="none"/>
 </g>
 <!-- glasses -->
 <g filter="url(#b2)" stroke="#7d7a78" stroke-width="1.100" fill="rgba(230,235,240,0.18)">
  <rect x="1199" y="371.500" width="27" height="10" rx="3"/>
  <rect x="1233" y="371.500" width="27" height="10" rx="3"/>
  <path d="M1226 375 H1233 M1199 374 L1194 373 M1260 374 L1265 373" fill="none"/>
 </g>
 <!-- banner text (left) -->
 <g filter="url(#b2)">
  <text x="1088" y="313" font-family="'Liberation Sans',sans-serif" font-weight="bold" font-size="13.500" fill="#d97a20" stroke="#d97a20" stroke-width="0.700" textLength="108" lengthAdjust="spacingAndGlyphs">ternational Conference on Multidisciplinary</text>
  <text x="1089" y="325" font-family="'Liberation Sans',sans-serif" font-weight="bold" font-size="13" fill="#d97a20" stroke="#d97a20" stroke-width="0.700" textLength="102" lengthAdjust="spacingAndGlyphs">Industry and Academic Research</text>
  <rect x="1091" y="326" width="4" height="6" fill="#8aa04a"/>
  <text x="1089" y="355.800" font-family="'Liberation Serif',serif" font-weight="bold" font-size="7.500" fill="#4a4a4a" textLength="59" lengthAdjust="spacingAndGlyphs">July 29-30, 2022</text>
  <text x="1096.600" y="363.600" font-family="'Liberation Serif',serif" font-weight="bold" font-size="7.500" fill="#4a4a4a" textLength="48" lengthAdjust="spacingAndGlyphs">Virtual Event</text>
  <!-- registered -->
  <path d="M1096.500 397 L1100.500 401 L1099.500 406 L1096.500 408.800 L1093.500 406 L1092.700 401Z" fill="#0e9b62"/>
  <rect x="1101" y="401" width="8" height="3" fill="#9fc7b5"/>
  <text x="1111" y="401.500" font-family="'Liberation Sans',sans-serif" font-weight="bold" font-size="6" fill="#222" textLength="25.500" lengthAdjust="spacingAndGlyphs">Registered</text>
  <text x="1112" y="407.300" font-family="'Liberation Sans',sans-serif" font-weight="bold" font-size="6" fill="#222" textLength="22" lengthAdjust="spacingAndGlyphs">Publisher</text>
  <text x="1113" y="410.300" font-family="'Liberation Sans',sans-serif" font-size="2.600" fill="#444" textLength="21" lengthAdjust="spacingAndGlyphs">Reg.No. 0000000000</text>
  <path d="M1105 413.500 L1106 416.500 L1104 416.500Z" fill="#e9e18a"/>
  <rect x="1099.700" y="421" width="10.300" height="5.800" fill="#a79bc9"/>
  <rect x="1099.700" y="423" width="10.300" height="1.500" fill="#d9c6d8"/>
  <text x="1111" y="418.200" font-family="'Liberation Sans',sans-serif" font-weight="bold" font-size="6.200" fill="#222" textLength="31.500" lengthAdjust="spacingAndGlyphs">Registered</text>
  <text x="1111" y="424" font-family="'Liberation Sans',sans-serif" font-weight="bold" font-size="4.600" fill="#333" textLength="31.500" lengthAdjust="spacingAndGlyphs">Book Publisher</text>
  <text x="1118" y="427.300" font-family="'Liberation Sans',sans-serif" font-size="2.600" fill="#444" textLength="16" lengthAdjust="spacingAndGlyphs">Reg.No. 0000</text>
  <text x="1122.600" y="435.800" font-family="'Liberation Sans',sans-serif" font-weight="bold" font-size="5.500" fill="#333" textLength="21" lengthAdjust="spacingAndGlyphs">Registered</text>
 </g>
 <!-- right side: IIARI + partners -->
 <g filter="url(#b2)">
  <path d="M1266 316 C1270 320 1278 319 1282 311 L1280 310 C1277 316 1271 317 1267 314Z" fill="#2236a8"/>
  <circle cx="1273" cy="310" r="8.300" fill="#f0801c"/>
  <text x="1270.300" y="316" font-family="'Liberation Serif',serif" font-style="italic" font-weight="bold" font-size="15" fill="#fff6ea">i</text>
  <text x="1284.800" y="308.800" font-family="'Liberation Sans',sans-serif" font-weight="bold" font-size="8.300" fill="#e58a2a" stroke="#e58a2a" stroke-width="0.450" textLength="77" lengthAdjust="spacingAndGlyphs">INSTITUTE OF INDUSTRY AND</text>
  <text x="1284.800" y="316" font-family="'Liberation Sans',sans-serif" font-weight="bold" font-size="7.600" fill="#e58a2a" stroke="#e58a2a" stroke-width="0.450" textLength="77" lengthAdjust="spacingAndGlyphs">ACADEMIC RESEARCH INCORPORATED</text>
  <text x="1295.800" y="319" font-family="'Liberation Sans',sans-serif" font-weight="bold" font-size="2.200" fill="#2b3db0" textLength="53" lengthAdjust="spacingAndGlyphs">Research • Publication • Consultancy • Community Service</text>
  <text x="1277.600" y="330" font-family="'Liberation Serif',serif" font-style="italic" font-size="10" fill="#d8444c" stroke="#d8444c" stroke-width="0.150" opacity="0.900" textLength="80" lengthAdjust="spacingAndGlyphs">Institutional Partners</text>
  <path d="M1302 333.200 H1313 V340 C1313 343 1310 344.800 1307.500 344.800 C1305 344.800 1302 343 1302 340Z" fill="#4a3c9e"/>
  <rect x="1305.500" y="335" width="4" height="5" fill="#d9a05a"/>
  <rect x="1304.500" y="341" width="6" height="2" fill="#b86aa0"/>
  <rect x="1315" y="335" width="18" height="1.200" fill="#c9c7c7"/><rect x="1315" y="337.500" width="18" height="1.200" fill="#c9c7c7"/><rect x="1315" y="340" width="19" height="1.200" fill="#c9c7c7"/><rect x="1315" y="342.500" width="10" height="1.200" fill="#c9c7c7"/>
  <circle cx="1290.800" cy="354.200" r="8" fill="#8fd11e"/><circle cx="1290.800" cy="354.200" r="6.200" fill="#18a04a"/><path d="M1287 352 L1291 350 L1293 356 L1289 358Z" fill="#3a7bd0"/><circle cx="1288" cy="353" r="1.200" fill="#e23a3a"/>
  <circle cx="1318.500" cy="356.400" r="8.500" fill="#6d7242"/><circle cx="1318.500" cy="356.400" r="6.300" fill="#c9c08a"/><rect x="1315" y="353" width="7" height="6" fill="#d0a848"/>
  <circle cx="1345.600" cy="356.400" r="8.500" fill="#a8302a"/><circle cx="1345.600" cy="356.400" r="6.500" fill="#e09a3a"/><circle cx="1346" cy="356" r="3.600" fill="#efd8b8"/>
  <circle cx="1291" cy="377.500" r="8.300" fill="#5c6068"/><circle cx="1291" cy="377.500" r="5" fill="#7d7a4a"/><circle cx="1291" cy="378" r="2.500" fill="#c04a3a"/>
  <circle cx="1318.500" cy="376.500" r="8.300" fill="#e3e9ee"/><circle cx="1318.500" cy="376.500" r="6.500" fill="#eef1f4"/><text x="1314" y="380" font-family="'Liberation Sans',sans-serif" font-weight="bold" font-size="9" fill="#3a55b0">i5</text>
  <circle cx="1345.600" cy="378" r="8.600" fill="#3d5a3a"/><circle cx="1345.600" cy="378" r="7" fill="#e9efd9"/><path d="M1345.600 372 L1350 383 H1341.200Z" fill="#c9d88a"/>
  <!-- facebook -->
  <rect x="1324" y="396.600" width="17.800" height="16" fill="#3b58a8"/>
  <text x="1330.500" y="412.800" font-family="'Liberation Sans',sans-serif" font-weight="bold" font-size="17" fill="#fff">f</text>
  <text x="1342.500" y="406.500" font-family="'Liberation Sans',sans-serif" font-weight="bold" font-size="4" fill="#333" textLength="14.500" lengthAdjust="spacingAndGlyphs">@iiari.org</text>
  <circle cx="1313.500" cy="415.700" r="5.600" fill="#2cb742"/>
  <path d="M1311 413.500 C1311 416.500 1313 418.500 1316 418.500 L1316.500 417 L1315 416 L1314 416.800 C1313 416.500 1312.500 415.500 1312.300 415 L1313 414 L1312.300 412.800Z" fill="#fff"/>
  <path d="M1309.500 419 L1308.500 421.800 L1311.500 420.500Z" fill="#2cb742"/>
  <text x="1321" y="418" font-family="'Liberation Sans',sans-serif" font-weight="bold" font-size="4" fill="#333" textLength="27" lengthAdjust="spacingAndGlyphs">(+63) 916 387 3537</text>
  <circle cx="1300" cy="422.500" r="4.600" fill="none" stroke="#9ab6d6" stroke-width="1"/>
  <path d="M1297 424 L1304 429 M1303 424 L1297 429" stroke="#6f7f96" stroke-width="0.800"/>
  <text x="1306" y="428" font-family="'Liberation Sans',sans-serif" font-weight="bold" font-size="3.800" fill="#333" textLength="19" lengthAdjust="spacingAndGlyphs">editor@iiari.org</text>
 </g>
 <path d="M1091 300 H1097.500 L1091 305.500Z" fill="#4a2430" filter="url(#b2)"/>
 <!-- Remove spotlight -->
 <rect x="1099" y="308.300" width="124" height="26.300" rx="4" fill="rgba(150,150,150,0.62)"/>
 <path d="M1109.500 313 a1.700 1.700 0 1 1 3.400 0 a1.700 1.700 0 1 1 -3.400 0Z M1110 316 L1113 316 L1115.500 322.500 H1112.200 L1111.500 326 L1110.800 322.500 H1107.500Z" fill="#f4f4f4"/>
 <!-- name bar -->
 <rect x="1091" y="431.500" width="200" height="19.500" fill="rgba(40,40,40,0.72)"/>
 <g fill="#fff"><rect x="1093.800" y="443.200" width="2.300" height="3.800"/><rect x="1097.700" y="440.700" width="2.300" height="6.300"/><rect x="1101.600" y="438" width="2.300" height="9"/><rect x="1105.600" y="434.800" width="2.300" height="12.200"/></g>
</svg>
<span class="t" id="h-rs" style="left:33px;top:14.800px;font-size:12px;color:#fff;transform:scaleX(0.9871)">Remove Spotlight</span>
<span class="t" id="h-name" style="left:22px;top:136px;font-size:12px;color:#fff;transform:scaleX(1.0064)">JULIO RAMILLO A. MERCURIO</span>
</div>
<div class="abs" style="left:1083px;top:362px;width:1.500px;height:26px;background:#dcdcdc"></div>
<div class="abs" style="left:1086px;top:362px;width:1.500px;height:26px;background:#dcdcdc"></div>

<!-- TOOLBAR -->
<div id="toolbar">
<!-- top-left zoom controls -->
<div class="abs" style="left:8px;top:31px;width:24px;height:24px;border-radius:5px;background:#222"></div>
<svg class="abs" style="left:12px;top:35px" width="16" height="16" viewBox="0 0 16 16"><path d="M8 0.800 L14 3 V7.500 C14 11.500 11.500 14 8 15.300 C4.500 14 2 11.500 2 7.500 V3Z" fill="#25d25c"/><path d="M5.200 8 L7.200 10 L11 6" stroke="#1d1d1d" stroke-width="1.500" fill="none" stroke-linecap="round" stroke-linejoin="round"/></svg>
<svg class="abs" style="left:45px;top:36.500px" width="14" height="14" viewBox="0 0 14 14"><defs><radialGradient id="recg" cx="0.5" cy="0.5" r="0.5"><stop offset="0" stop-color="#d8362f"/><stop offset="0.700" stop-color="#c93a34"/><stop offset="1" stop-color="#a84a44"/></radialGradient><filter id="recb"><feGaussianBlur stdDeviation="0.600"/></filter></defs><circle cx="7" cy="7" r="5.900" fill="url(#recg)"/><ellipse cx="7" cy="3.300" rx="3" ry="1.300" fill="#f3b3ac" filter="url(#recb)"/><ellipse cx="7" cy="10.800" rx="3" ry="1.400" fill="#f0a8a0" filter="url(#recb)" opacity="0.900"/></svg>
<span class="t" id="t-rec" style="left:64px;top:37px;font-size:12.500px;color:#e8e8e8;transform:scaleX(0.9125)">Recording</span>
<div class="abs" style="left:1303px;top:31px;width:55px;height:26px;border-radius:6px;background:#222"></div>
<svg class="abs" style="left:1309.800px;top:38px" width="10.500" height="10" viewBox="0 0 12 11" preserveAspectRatio="none"><rect x="0" y="3" width="12" height="8" rx="1" fill="#e6e6e6"/><rect x="0" y="0" width="3" height="2.300" fill="#e6e6e6"/><rect x="4.500" y="0" width="3" height="2.300" fill="#e6e6e6"/><rect x="9" y="0" width="3" height="2.300" fill="#e6e6e6"/></svg>
<span class="t" id="t-vw" style="left:1327px;top:37px;font-size:12.500px;color:#e8e8e8;transform:scaleX(0.8930)">View</span>

<!-- bottom toolbar icons -->
<svg class="abs" style="left:0;top:675px" width="1366" height="53" viewBox="0 675 1366 53">
 <g fill="#8f8f8f">
  <!-- mic -->
  <rect x="41.600" y="681" width="7.600" height="14" rx="3.800"/>
  <path d="M38.500 690.500 a6.900 6.900 0 0 0 13.800 0" fill="none" stroke="#8f8f8f" stroke-width="1.500"/>
  <rect x="44.700" y="697" width="1.500" height="4"/>
  <rect x="41" y="700.800" width="9" height="1.600" rx="0.800"/>
  <!-- video -->
  <rect x="126.500" y="685" width="17.500" height="14" rx="3"/>
  <path d="M145 690 L151.500 685.800 V698.200 L145 694Z"/>
  <!-- security shield -->
  <path d="M441 682.300 L450 685.600 V692 C450 697.500 446.500 700.500 441 702.300 C435.500 700.500 432 697.500 432 692 V685.600Z" fill="none" stroke="#a9a9a9" stroke-width="1.500"/>
  <path d="M441 682.300 L450 685.600 V692 H441Z" fill="#a9a9a9"/>
  <path d="M441 692 V702.300 C435.500 700.500 432 697.500 432 692Z" fill="#a9a9a9"/>
  <!-- participants -->
  <circle cx="541" cy="688.400" r="4.300" fill="#a9a9a9"/>
  <path d="M533.800 700.700 C533.800 695.500 537 694 541 694 C545 694 548.300 695.500 548.300 700.700Z" fill="#a9a9a9"/>
  <circle cx="551.500" cy="689" r="3.500" fill="#a9a9a9"/>
  <path d="M549.500 700.700 C549.500 697.500 549 696 548 694.600 C549 694.200 550 694 551.500 694 C555 694 558 695.500 558 700.700Z" fill="#a9a9a9"/>
  <!-- chat -->
  <path d="M644 683 H657.500 A3.200 3.200 0 0 1 660.700 686.200 V692.800 A3.200 3.200 0 0 1 657.500 696 H650 L645.500 700.700 V696 H644 A3.200 3.200 0 0 1 640.800 692.800 V686.200 A3.200 3.200 0 0 1 644 683Z" fill="#a9a9a9"/>
  <!-- share -->
  <rect x="728" y="683" width="24" height="18" rx="3" fill="#23d959"/>
  <path d="M740 687.200 L735.600 691.800 M740 687.200 L744.400 691.800 M740 687.500 V697" stroke="#111" stroke-width="1.800" fill="none" stroke-linecap="round"/>
  <!-- record -->
  <circle cx="829" cy="692" r="9.500" fill="none" stroke="#a9a9a9" stroke-width="1.500"/>
  <circle cx="829" cy="692" r="6.800" fill="#a9a9a9"/>
  <!-- breakout -->
  <rect x="910" y="682.300" width="9" height="8.800" rx="1.500" fill="#a9a9a9"/>
  <rect x="921.200" y="682.300" width="9" height="8.800" rx="1.500" fill="#a9a9a9"/>
  <rect x="910" y="692.800" width="9" height="8.800" rx="1.500" fill="#a9a9a9"/>
  <rect x="921.200" y="692.800" width="9" height="8.800" rx="1.500" fill="#a9a9a9"/>
  <!-- reactions -->
  <circle cx="1011.500" cy="693.200" r="8.800" fill="#a9a9a9"/>
  <circle cx="1008.300" cy="691" r="1.200" fill="#1a1a1a"/>
  <circle cx="1014.700" cy="691" r="1.200" fill="#1a1a1a"/>
  <path d="M1007 695 C1008.500 698.500 1014.500 698.500 1016 695Z" fill="#1a1a1a"/>
  <circle cx="1020" cy="683.500" r="4.600" fill="#1a1a1a"/>
  <path d="M1017.200 683.300 H1023 M1020.100 680.400 V686.200" stroke="#a9a9a9" stroke-width="1.300"/>
 </g>
 <!-- red slashes -->
 <path d="M34.500 702.800 L57.700 680.800" stroke="#e0393e" stroke-width="1.600"/>
 <path d="M128 703 L150.800 681" stroke="#e0393e" stroke-width="1.600"/>
 <!-- carets -->
 <g stroke="#c4c4c4" stroke-width="1.500" fill="none">
  <path d="M74.300 693.800 L77.600 690.400 L80.900 693.800"/>
  <path d="M172.400 693.800 L175.700 690.400 L179 693.800"/>
  <path d="M595.700 693.800 L599 690.400 L602.300 693.800"/>
  <path d="M773.600 693.800 L776.900 690.400 L780.200 693.800"/>
 </g>
</svg>
<span class="t lbl" id="b-unmute" style="left:24px;top:709px;transform:scaleX(0.9753)">Unmute</span>
<span class="t lbl" id="b-video" style="left:109px;top:709px;transform:scaleX(0.9509)">Start Video</span>
<span class="t lbl" id="b-sec" style="left:419px;top:709px;transform:scaleX(0.9522)">Security</span>
<span class="t lbl" id="b-part" style="left:515px;top:709px;transform:scaleX(0.9493)">Participants</span>
<span class="t lbl" id="b-70" style="left:562px;top:684px;font-size:12px;transform:scaleX(0.9581)">70</span>
<span class="t lbl" id="b-chat" style="left:639px;top:709px;transform:scaleX(0.9240)">Chat</span>
<span class="t lbl" id="b-share" style="left:705px;top:709px;color:#23d959;transform:scaleX(0.9027)">Share Screen</span>
<span class="t lbl" id="b-record" style="left:810px;top:709px;transform:scaleX(0.9132)">Record</span>
<span class="t lbl" id="b-break" style="left:877px;top:709px;transform:scaleX(0.9322)">Breakout Rooms</span>
<span class="t lbl" id="b-react" style="left:986px;top:709px;transform:scaleX(0.9102)">Reactions</span>
<div class="abs" style="left:1293px;top:688px;width:61px;height:27px;border-radius:7px;background:#c1272d"></div>
<span class="t" id="b-leave" style="left:1306px;top:695px;font-size:12.500px;font-weight:bold;color:#fff;transform:scaleX(0.9167)">Leave</span>
</div>

<div class="abs" style="left:48px;top:727px;width:344px;height:1px;background:#0e0e0e"></div>
<!-- TASKBAR -->
<div class="abs" id="taskbar">
<svg class="abs" style="left:0;top:0" width="1366" height="40" viewBox="0 728 1366 40">
 <defs>
  <linearGradient id="tkg" x1="0" y1="0" x2="1" y2="0"><stop offset="0" stop-color="#25373f"/><stop offset="0.35" stop-color="#23323a"/><stop offset="0.7" stop-color="#1f2d34"/><stop offset="1" stop-color="#1f323b"/></linearGradient>
  <linearGradient id="edg" x1="0" y1="0" x2="1" y2="1"><stop offset="0" stop-color="#35c1f1"/><stop offset="0.5" stop-color="#1b9de2"/><stop offset="1" stop-color="#0c59a4"/></linearGradient>
  <linearGradient id="edg2" x1="0" y1="1" x2="1" y2="0"><stop offset="0" stop-color="#2ab4e8"/><stop offset="0.6" stop-color="#4ccf70"/><stop offset="1" stop-color="#7be05a"/></linearGradient>
  <linearGradient id="mlg" x1="0" y1="0" x2="1" y2="1"><stop offset="0" stop-color="#1f8fe0"/><stop offset="1" stop-color="#35c6f4"/></linearGradient>
 </defs>
 <rect x="0" y="728" width="1366" height="40" fill="url(#tkg)"/>
 <!-- windows logo -->
 <g fill="#fff">
  <path d="M15.800 742.100 L22.400 741.200 V747.400 H15.800Z"/><path d="M23.300 741.100 L32.200 739.800 V747.400 H23.300Z"/>
  <path d="M15.800 748.300 H22.400 V754.600 L15.800 753.700Z"/><path d="M23.300 748.300 H32.200 V756 L23.300 754.700Z"/>
 </g>
 <!-- search box -->
 <rect x="48" y="728" width="344" height="40" fill="#f2f2f2"/><rect x="48.500" y="728.500" width="343" height="40" fill="none" stroke="#fafafa" stroke-width="1"/>
 <circle cx="71.300" cy="745.800" r="5.300" fill="none" stroke="#222" stroke-width="1.400"/>
 <path d="M67.500 749.700 L60.500 755.300" stroke="#222" stroke-width="1.500"/>
 <!-- task view -->
 <g stroke="#fff" stroke-width="1.300" fill="none">
  <rect x="411" y="743.200" width="9.500" height="8.400"/>
  <path d="M408 741.400 V740.300 H420.500 V741.400 M408 753.400 V754.500 H420.500 V753.400 M423.600 740 V755"/>
 </g>
 <rect x="422.300" y="744.500" width="2.600" height="3" fill="#fff"/>
 <!-- edge -->
 <circle cx="467.200" cy="748" r="12" fill="url(#edg)"/>
 <path d="M455.500 746 C457 738 464 735.800 469 736 C476 736.300 479.500 741.500 479.300 746.500 C479 750 476 752 472.500 752 C469.500 752 468.500 750.500 469.500 749 C471 747 470 743.500 466 743 C461 742.500 456.500 745 455.500 749Z" fill="url(#edg2)"/>
 <path d="M462 747 C462 753 467 758 474 757.500 C470 760.500 463 760.500 459 756.500 C456 753.500 456 749 458 746 C459.500 744 462 743.500 464 744 C463 745 462 746 462 747Z" fill="#0e5aa8"/>
 <!-- explorer -->
 <path d="M505 739.500 A1 1 0 0 1 506 738.400 H513 L514.500 740.200 H525.500 A1.200 1.200 0 0 1 526.700 741.400 V743 H505Z" fill="#e8a317"/>
 <rect x="505" y="741.600" width="21.700" height="15" rx="1" fill="#fbd75b"/>
 <path d="M509.500 756.600 V750.500 A1 1 0 0 1 510.500 749.500 H521.200 A1 1 0 0 1 522.200 750.500 V756.600 H518.200 V753 H513.500 V756.600Z" fill="#3d8fe0"/>
 <rect x="496" y="766" width="40" height="2" fill="#76b9ed"/>
 <!-- mail -->
 <path d="M553 744 L565 736.600 L577 744 V759 H553Z" fill="#0f68bf"/>
 <path d="M555 744.500 H575 V752 H555Z" fill="#fff"/>
 <path d="M553 744.500 L565 752.500 L577 744.500 V759 H553Z" fill="url(#mlg)"/>
 <path d="M556.500 744.800 H573.500 L565 750.800Z" fill="#e4eef6"/>
 <!-- dropbox -->
 <rect x="602" y="736" width="24" height="24" fill="#0061fe"/>
 <g fill="#fff">
  <path d="M610.300 741.600 L613.900 743.900 L610.300 746.200 L606.700 743.900Z"/><path d="M617.700 741.600 L621.300 743.900 L617.700 746.200 L614.100 743.900Z"/>
  <path d="M610.300 746.400 L613.900 748.700 L610.300 751 L606.700 748.700Z"/><path d="M617.700 746.400 L621.300 748.700 L617.700 751 L614.100 748.700Z"/>
  <path d="M614 749.600 L617.400 751.800 L614 754 L610.600 751.800Z"/>
 </g>
 <!-- S app -->
 <path d="M666.800 735.900 L663.700 742.900 L668.400 750.700 L657.900 760 L661.100 752.700 L656.700 744.800Z" fill="#fff"/>
 <path d="M660.800 741.300 L664.300 743.500 M660.500 753.700 L664 751.600" stroke="#2b3940" stroke-width="0.600"/>
 <!-- scanner -->
 <defs><linearGradient id="scg" x1="0" y1="0" x2="0" y2="1"><stop offset="0" stop-color="#2c42c8"/><stop offset="1" stop-color="#0f1788"/></linearGradient></defs>
 <rect x="700" y="736" width="24" height="24" rx="3.500" fill="url(#scg)"/>
 <path d="M703.700 739.200 H720.300 L718.600 742 H705.400Z" fill="#e9ecf6"/>
 <path d="M705.600 741 H718.400 L718.600 742 H705.400Z" fill="#aab2d6"/>
 <path d="M706.900 743.500 H717.100 L721.200 755.800 H702.800Z" fill="#dfe4fa"/>
 <path d="M716.600 744.600 L717.800 751.500 H706.500Z" fill="#1626a8"/>
 <path d="M711 748.300 L717.200 748 L717.400 749.300 L709.500 749.600Z" fill="#1c8fd8"/>
 <path d="M704 753.500 H720.300 L721.200 755.800 H702.800Z" fill="#fff"/>
 <!-- chrome -->
 <circle cx="760.900" cy="747.400" r="11" fill="#ea4335"/>
 <path d="M760.900 747.400 L751.400 741.900 A11 11 0 0 0 760.900 758.400 L766.400 750.600Z" fill="#34a853"/>
 <path d="M760.900 747.400 L766.400 750.600 L760.900 758.400 A11 11 0 0 0 770.400 741.900 H760.900Z" fill="#fbbc04"/>
 <circle cx="760.900" cy="747.400" r="5" fill="#fff"/>
 <circle cx="760.900" cy="747.400" r="4" fill="#4285f4"/>
 <circle cx="767.300" cy="753.800" r="7.300" fill="#c9386a"/>
 <circle cx="767.300" cy="753.800" r="6.300" fill="#d9b6a8"/>
 <path d="M762.500 757.500 C763 752 763 749 767.300 748.500 C771.500 749 771.500 752 772 757.500 C770 759.500 764.500 759.500 762.500 757.500Z" fill="#b08a6a"/>
 <ellipse cx="767.300" cy="752.800" rx="2.600" ry="3.300" fill="#f0cdb8"/>
 <path d="M762.800 757.300 C765 755.500 769.600 755.500 771.800 757.300 C770 760 764.600 760 762.800 757.300Z" fill="#b5264f"/>
 <rect x="741" y="766" width="40" height="2" fill="#76b9ed"/>
 <!-- viber -->
 <path d="M810 736.400 C818 736.400 821.200 740 821.200 747 C821.200 754 817.500 757 810.500 757 L806.500 757 L803.700 760 V756 C800 754.500 798.400 751.500 798.400 747 C798.400 740 802 736.400 810 736.400Z" fill="#fff"/>
 <path d="M810 737.800 C817 737.800 819.800 741 819.800 747 C819.800 753 816.500 755.600 810.500 755.600 L806 755.600 L804.800 757.500 V755 C801.300 753.800 799.800 751 799.800 747 C799.800 741 803 737.800 810 737.800Z" fill="#7360f2"/>
 <path d="M805.300 742.300 C806.300 741.300 807.300 741.600 807.800 742.500 L808.600 744 C808.900 744.700 808.600 745.300 808 745.700 C807.600 746 807.700 746.500 808 747 C808.800 748.500 810 749.700 811.500 750.400 C812 750.600 812.400 750.500 812.700 750 C813.200 749.400 813.900 749.300 814.500 749.700 L815.900 750.700 C816.700 751.300 816.600 752.200 815.800 753 C815 753.800 814 754 813 753.600 C808.500 751.800 805.500 748.700 804.300 744.500 C804.100 743.600 804.500 742.900 805.300 742.300Z" fill="#fff"/>
 <path d="M810.300 741 C813.500 741 816 743.500 816 746.800 M810.500 743 C812.500 743 814 744.600 814 746.600 M810.600 744.800 C811.600 744.800 812.300 745.600 812.300 746.500" stroke="#fff" stroke-width="0.800" fill="none" stroke-linecap="round"/>
 <rect x="790" y="766" width="40" height="2" fill="#76b9ed"/>
 <!-- zoom -->
 <rect x="835" y="728" width="44" height="40" fill="#465158"/>
 <rect x="879" y="728" width="3" height="40" fill="#303c43"/>
 <rect x="835" y="766" width="44" height="2" fill="#76b9ed"/>
 <rect x="847.800" y="736.600" width="22" height="22.500" rx="7" fill="#4a8cff"/>
 <rect x="852" y="743.800" width="9.500" height="8" rx="2" fill="#fff"/>
 <path d="M862.300 746.600 L866 744 V751.600 L862.300 749Z" fill="#fff"/>
 <!-- help -->
 <circle cx="951" cy="748" r="10.200" fill="#fff"/>
 <circle cx="951" cy="748" r="8.400" fill="#1a9be0"/>
 <circle cx="959.300" cy="752.600" r="4.600" fill="#f0a81e"/>
 <rect x="958.700" y="750" width="1.300" height="5" fill="#fff"/>
 <!-- umbrella -->
 <path d="M993.800 742 V739.500 A2.400 2.400 0 0 1 998.600 739.500 V740.800" stroke="#8a8a8a" stroke-width="1.400" fill="none"/>
 <path d="M993.800 741.300 C989.800 746 989.800 752 993.800 760 C998.300 752 998.300 746 993.800 741.300Z" fill="#4aa3e8"/>
 <path d="M993.800 741.500 C992.600 746 992.600 752 993.800 759.500" stroke="#1c6cb8" stroke-width="0.800" fill="none"/>
 <circle cx="1002.700" cy="756.700" r="3.500" fill="#e81123"/>
 <!-- tray caret -->
 <path d="M1068.800 750.500 L1074.700 744.600 L1080.600 750.500" stroke="#fff" stroke-width="1.300" fill="none"/>
 <!-- meet now -->
 <g stroke="#fff" stroke-width="1.200" fill="none">
  <rect x="1094.300" y="744" width="7.200" height="7.400" rx="1.500"/>
  <path d="M1101.700 746.800 L1105 744.800 V750.600 L1101.700 748.600"/>
  <path d="M1094.600 742.200 C1094.800 740.800 1095.600 740 1097 740 H1099.200 C1100.600 740 1101.400 740.800 1101.600 742.200"/>
  <path d="M1094.600 753.200 C1094.800 754.600 1095.600 755.400 1097 755.400 H1099.200 C1100.600 755.400 1101.400 754.600 1101.600 753.200"/>
 </g>
 <!-- tray mic -->
 <rect x="1119.700" y="739.700" width="6" height="11.300" rx="3" fill="#fff"/>
 <path d="M1117.800 747.500 V748.500 A4.900 4.900 0 0 0 1127.600 748.500 V747.500 M1122.700 753.500 V755.800 M1119.700 756 H1125.700" stroke="#fff" stroke-width="1.100" fill="none"/>
 <!-- battery -->
 <rect x="1140.400" y="744.300" width="13" height="8.400" fill="none" stroke="#fff" stroke-width="1.200"/>
 <rect x="1153.700" y="746.700" width="1.500" height="3.600" fill="#fff"/>
 <rect x="1142.300" y="746.200" width="5" height="4.600" fill="#fff"/>
 <!-- wifi -->
 <g stroke="#fff" stroke-width="1.200" fill="none">
  <path d="M1166.800 754.800 C1167 748.500 1171.500 743.600 1177.800 743.400"/>
  <path d="M1170 754.800 C1170.200 750.300 1173.300 746.900 1177.800 746.700"/>
  <path d="M1173.200 754.800 C1173.400 752.200 1175.200 750.200 1177.800 750"/>
 </g>
 <circle cx="1176.600" cy="753.700" r="1.500" fill="#fff"/>
 <!-- volume -->
 <path d="M1187.600 745.500 H1190.300 L1194.200 741.900 V753.700 L1190.300 750.100 H1187.600Z" stroke="#fff" stroke-width="1.100" fill="none" stroke-linejoin="round"/>
 <path d="M1196.300 745.300 A3.800 3.800 0 0 1 1196.300 750.300 M1198.400 743.400 A6.600 6.600 0 0 1 1198.400 752.200" stroke="#fff" stroke-width="1.100" fill="none"/>
 <path d="M1200.600 741.600 A9.500 9.500 0 0 1 1200.600 754" stroke="#6c767b" stroke-width="1.100" fill="none"/>
 <!-- notification -->
 <path d="M1325.500 740 H1340.500 V751 H1331 L1328 754 V751 H1325.500Z" fill="#fff"/>
 <path d="M1328 743 H1338 M1328 745.500 H1338 M1328 748 H1338" stroke="#22343c" stroke-width="0.900"/>
 <circle cx="1340.300" cy="755.300" r="8" fill="#2b2b2b" stroke="#55595b" stroke-width="1.200"/>
 <rect x="1361" y="730" width="1" height="38" fill="#56626a"/>
</svg>
<span class="t" id="k-search" style="left:88px;top:13px;font-size:15px;color:#2a2a2a;transform:scaleX(0.9692)">Type here to search</span>
<span class="t" id="k-help" style="left:946px;top:12px;font-size:16px;font-weight:bold;color:#fff">?</span>
<span class="t" id="k-rain" style="left:1014px;top:13.800px;font-size:14px;color:#fff;transform:scaleX(0.8822)">Rain...</span>
<span class="t" id="k-eng" style="left:1213px;top:14px;font-size:11.500px;color:#fff;transform:scaleX(0.8988)">ENG</span>
<span class="t" id="k-time" style="left:1257px;top:6px;font-size:11.500px;color:#fff;transform:scaleX(1.0009)">2:35 pm</span>
<span class="t" id="k-date" style="left:1249px;top:23px;font-size:11.500px;color:#fff;transform:scaleX(0.9972)">30/07/2022</span>
<span class="t" id="k-4" style="left:1337px;top:21px;font-size:12px;font-weight:bold;color:#fff">4</span>
</div>

</body>
</html>
